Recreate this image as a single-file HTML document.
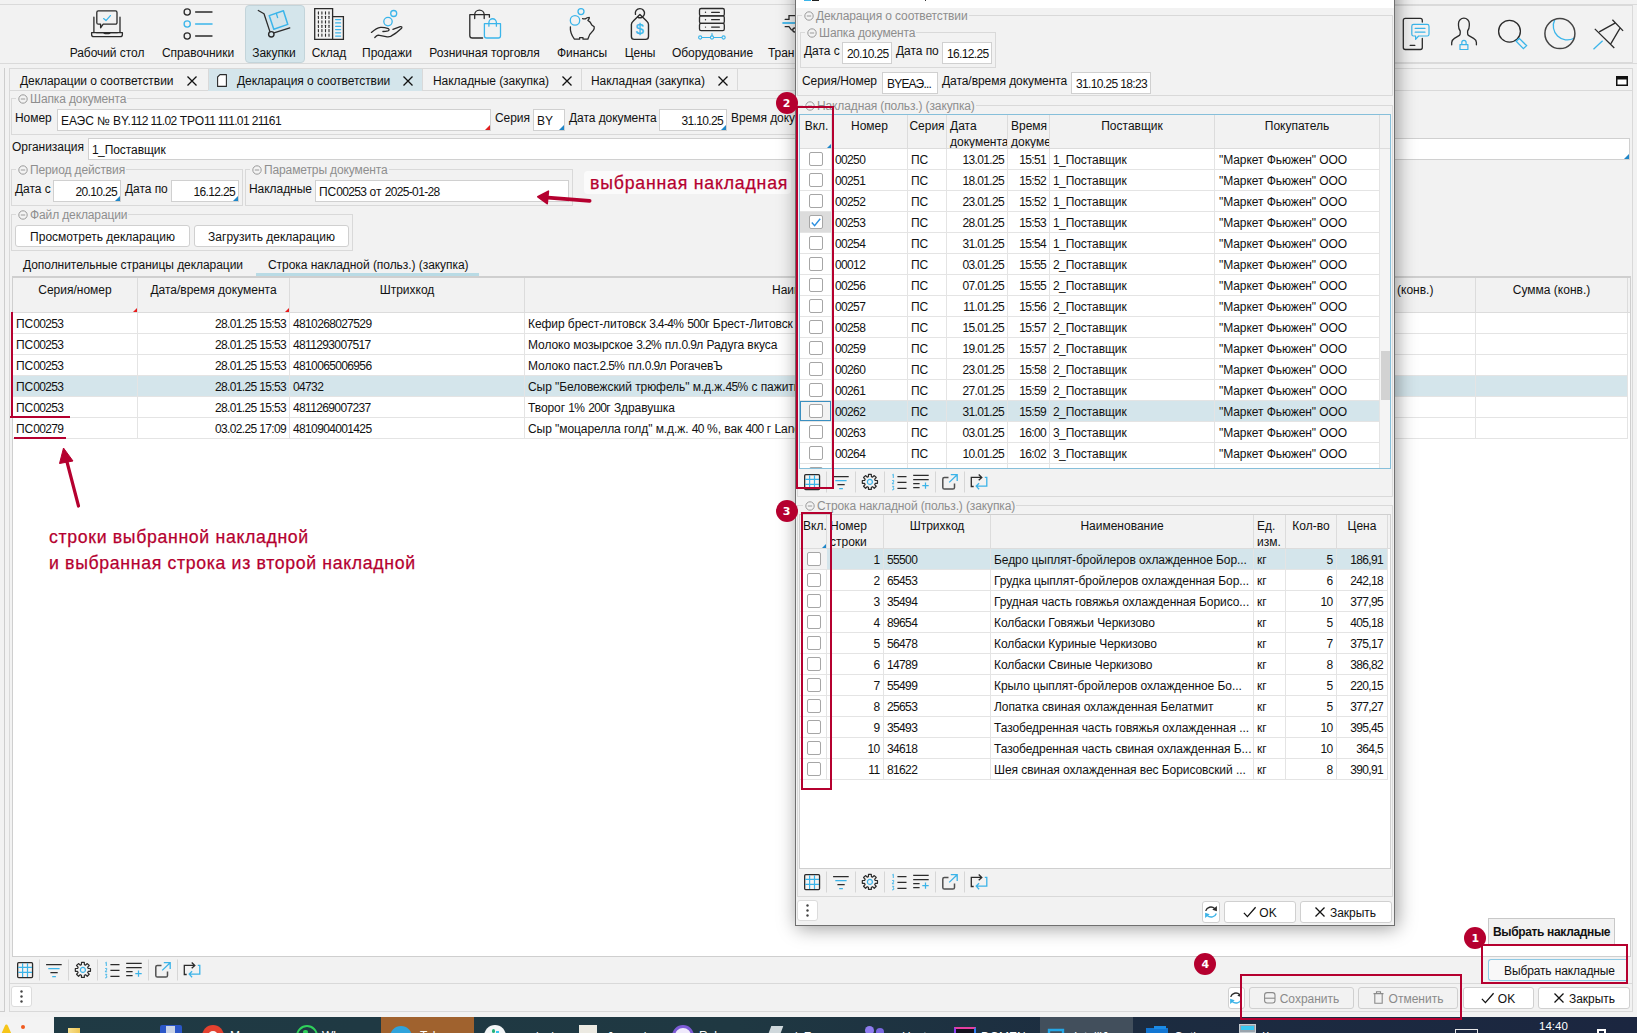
<!DOCTYPE html><html lang="ru"><head><meta charset="utf-8"><title>Декларация о соответствии</title><style>
*{box-sizing:border-box;margin:0;padding:0}
html,body{width:1637px;height:1033px;overflow:hidden;background:#f2f2f2}
body{position:relative;font-family:"Liberation Sans",sans-serif;font-size:12px;color:#111;line-height:14px}
.a{position:absolute;white-space:nowrap}
.l{position:absolute;white-space:nowrap;font-size:12px;color:#111;letter-spacing:-0.05px}
.c{position:absolute;white-space:nowrap;font-size:12px;letter-spacing:-0.07px;color:#111}
.c b,.inp b{font-weight:normal;letter-spacing:-0.64px}
.inp{position:absolute;background:#fff;border:1px solid #d0d0d0;font-size:12px;letter-spacing:-0.07px;white-space:nowrap;overflow:hidden}
.inp span{position:absolute;top:4px}
.nar{font-style:normal;letter-spacing:-0.8px}
.fs{position:absolute;border:1px solid #d9d9d9}
.lg{position:absolute;white-space:nowrap;font-size:12px;color:#8e8e8e;background:#f2f2f2;padding:0 1px;letter-spacing:-0.12px}
.hl{position:absolute;height:1px;background:#d9d9d9}
.vl{position:absolute;width:1px;background:#d9d9d9}
.btn{position:absolute;background:#fff;border:1px solid #d0d0d0;border-radius:3px;text-align:center;font-size:12px;white-space:nowrap}
.tb{position:absolute;background:#fff;border:1px solid #cfcfcf;overflow:hidden}
.hd{position:absolute;background:#f2f2f2;border-right:1px solid #dcdcdc;border-bottom:1px solid #dcdcdc;font-size:12px;text-align:center;white-space:nowrap;overflow:hidden;line-height:16px;padding-top:3px}
.row{position:absolute;left:0;height:21px;border-bottom:1px solid #e4e4e4}
.cb{position:absolute;width:14px;height:14px;border:1px solid #a6a6a6;border-radius:2px;background:#fff}
.rr{position:absolute;border:2px solid #b5002f}
.circ{position:absolute;width:22px;height:22px;border-radius:11px;background:#b5002f;color:#fff;font-weight:bold;font-size:11px;text-align:center;line-height:24.6px;font-family:"DejaVu Sans","Liberation Sans",sans-serif}
.ann{position:absolute;white-space:nowrap;color:#b5002f;font-size:17.7px;letter-spacing:0.66px;line-height:20px;-webkit-text-stroke:0.25px #b5002f}
svg{position:absolute;overflow:visible}
</style></head><body>
<div class="hl" style="left:0px;top:4px;width:1637px;background:#dadada"></div>
<div class="hl" style="left:0px;top:63px;width:1637px;background:#dadada"></div>
<div class="a" style="left:245px;top:5px;width:60px;height:58px;background:#d4e5eb;border:1px solid #c3d4da;border-radius:4px"></div>
<div class="l" style="left:7px;width:200px;text-align:center;top:46px">Рабочий стол</div>
<div class="l" style="left:98px;width:200px;text-align:center;top:46px">Справочники</div>
<div class="l" style="left:174px;width:200px;text-align:center;top:46px">Закупки</div>
<div class="l" style="left:229px;width:200px;text-align:center;top:46px">Склад</div>
<div class="l" style="left:287px;width:200px;text-align:center;top:46px">Продажи</div>
<div class="l" style="left:384.5px;width:200px;text-align:center;top:46px">Розничная торговля</div>
<div class="l" style="left:482px;width:200px;text-align:center;top:46px">Финансы</div>
<div class="l" style="left:540px;width:200px;text-align:center;top:46px">Цены</div>
<div class="l" style="left:612.5px;width:200px;text-align:center;top:46px">Оборудование</div>
<div class="l" style="left:768px;top:46px;">Тран</div>
<svg style="left:88px;top:6px" width="40" height="36" viewBox="88 6 40 36" fill="none" stroke-linecap="round" stroke-linejoin="round" >
<path d="M98.3 10.9H115.5a1.5 1.5 0 0 1 1.5 1.5V22.7a1.5 1.5 0 0 1 -1.5 1.5H103.2L100.6 27.8V24.2H98.3a1.5 1.5 0 0 1 -1.5 -1.5V12.4a1.5 1.5 0 0 1 1.5 -1.5Z" stroke="#2b2b2b" stroke-width="1.3"/>
<path d="M103.6 18.6L106 20.6L110.4 15.6" stroke="#3bb5ea" stroke-width="1.3"/>
<path d="M93.9 17.2V32.4M120 17.2V32.4" stroke="#2b2b2b" stroke-width="1.3"/>
<path d="M96.5 32.6H103.4Q104.2 33.6 105.4 33.6H108.6Q109.8 33.6 110.4 32.6H117.5" stroke="#2b2b2b" stroke-width="1.2"/>
<path d="M91.6 32.6H122.4V34.4a2.2 2.2 0 0 1 -2.2 2.2H93.8a2.2 2.2 0 0 1 -2.2 -2.2Z" stroke="#2b2b2b" stroke-width="1.3"/>
</svg>
<svg style="left:180px;top:6px" width="40" height="36" viewBox="180 6 40 36" fill="none" stroke-linecap="round" stroke-linejoin="round" >
<circle cx="187.2" cy="12" r="3.1" stroke="#2b2b2b" stroke-width="1.3"/><path d="M195.6 12H212" stroke="#2b2b2b" stroke-width="1.3"/>
<circle cx="187.2" cy="24" r="3.1" stroke="#3bb5ea" stroke-width="1.3"/><path d="M195.6 24H212" stroke="#3bb5ea" stroke-width="1.5"/>
<circle cx="187.2" cy="36" r="3.1" stroke="#2b2b2b" stroke-width="1.3"/><path d="M195.6 36H212" stroke="#2b2b2b" stroke-width="1.3"/>
</svg>
<svg style="left:255px;top:6px" width="40" height="36" viewBox="255 6 40 36" fill="none" stroke-linecap="round" stroke-linejoin="round" >
<path d="M269.2 15.6L283.4 10.8L287.8 24.4L273.8 29.2Z" stroke="#3bb5ea" stroke-width="1.5"/>
<path d="M276.3 13.3L277.6 17.6" stroke="#3bb5ea" stroke-width="1.3"/>
<path d="M258.3 10.5L264 13.8L269.9 31.6" stroke="#2b2b2b" stroke-width="1.3"/>
<path d="M274 32.9L289.8 27.9" stroke="#2b2b2b" stroke-width="1.3"/>
<circle cx="271.3" cy="34.3" r="2.7" stroke="#2b2b2b" stroke-width="1.4"/>
</svg>
<svg style="left:310px;top:6px" width="40" height="36" viewBox="310 6 40 36" fill="none" stroke-linecap="round" stroke-linejoin="round" >
<path d="M314.7 8.6H332.6V39.3H314.7Z" stroke="#2b2b2b" stroke-width="1.3" stroke-linejoin="miter"/>
<path d="M332.6 16.6H343.4V39.3H332.6" stroke="#2b2b2b" stroke-width="1.3" stroke-linejoin="miter"/>
<path d="M318.4 11.9V14.1" stroke="#2b2b2b" stroke-width="1.1"/><path d="M318.4 16.299999999999997V18.5" stroke="#2b2b2b" stroke-width="1.1"/><path d="M318.4 20.799999999999997V23.0" stroke="#2b2b2b" stroke-width="1.1"/><path d="M318.4 25.2V27.400000000000002" stroke="#2b2b2b" stroke-width="1.1"/><path d="M318.4 29.599999999999998V31.8" stroke="#2b2b2b" stroke-width="1.1"/><path d="M318.4 34.0V36.2" stroke="#2b2b2b" stroke-width="1.1"/><path d="M321.9 11.9V14.1" stroke="#2b2b2b" stroke-width="1.1"/><path d="M321.9 16.299999999999997V18.5" stroke="#2b2b2b" stroke-width="1.1"/><path d="M321.9 20.799999999999997V23.0" stroke="#2b2b2b" stroke-width="1.1"/><path d="M321.9 25.2V27.400000000000002" stroke="#2b2b2b" stroke-width="1.1"/><path d="M321.9 29.599999999999998V31.8" stroke="#2b2b2b" stroke-width="1.1"/><path d="M321.9 34.0V36.2" stroke="#2b2b2b" stroke-width="1.1"/><path d="M325.5 11.9V14.1" stroke="#2b2b2b" stroke-width="1.1"/><path d="M325.5 16.299999999999997V18.5" stroke="#2b2b2b" stroke-width="1.1"/><path d="M325.5 20.799999999999997V23.0" stroke="#2b2b2b" stroke-width="1.1"/><path d="M325.5 25.2V27.400000000000002" stroke="#2b2b2b" stroke-width="1.1"/><path d="M325.5 29.599999999999998V31.8" stroke="#2b2b2b" stroke-width="1.1"/><path d="M325.5 34.0V36.2" stroke="#2b2b2b" stroke-width="1.1"/><path d="M329.0 11.9V14.1" stroke="#2b2b2b" stroke-width="1.1"/><path d="M329.0 16.299999999999997V18.5" stroke="#2b2b2b" stroke-width="1.1"/><path d="M329.0 20.799999999999997V23.0" stroke="#2b2b2b" stroke-width="1.1"/><path d="M329.0 25.2V27.400000000000002" stroke="#2b2b2b" stroke-width="1.1"/><path d="M329.0 29.599999999999998V31.8" stroke="#2b2b2b" stroke-width="1.1"/><path d="M329.0 34.0V36.2" stroke="#2b2b2b" stroke-width="1.1"/><path d="M335.6 19.6H340.6" stroke="#3bb5ea" stroke-width="1.3"/><path d="M335.6 22.9H340.6" stroke="#3bb5ea" stroke-width="1.3"/><path d="M335.6 26.3H340.6" stroke="#3bb5ea" stroke-width="1.3"/><path d="M335.6 29.6H340.6" stroke="#3bb5ea" stroke-width="1.3"/><path d="M335.6 32.8H340.6" stroke="#3bb5ea" stroke-width="1.3"/><path d="M335.6 36.1H340.6" stroke="#3bb5ea" stroke-width="1.3"/>
</svg>
<svg style="left:368px;top:6px" width="40" height="36" viewBox="368 6 40 36" fill="none" stroke-linecap="round" stroke-linejoin="round" >
<circle cx="393.7" cy="13.5" r="3" stroke="#3bb5ea" stroke-width="1.3"/>
<circle cx="388" cy="21.6" r="4.2" stroke="#3bb5ea" stroke-width="1.3"/>
<path d="M371.4 32.4Q376.5 28 380.6 27.4Q384 27.2 388.4 28.6Q390 30.2 388 30.9Q385.5 31.4 382.9 31.5" stroke="#2b2b2b" stroke-width="1.3"/>
<path d="M392.9 29.4L400.3 26.7Q402.6 26.3 401.6 28.2Q396 33.5 390.6 36.4Q388.6 37.1 386 36.6L378.2 35.2Q376.6 35.6 374.8 37.5" stroke="#2b2b2b" stroke-width="1.3"/>
</svg>
<svg style="left:465px;top:6px" width="40" height="36" viewBox="465 6 40 36" fill="none" stroke-linecap="round" stroke-linejoin="round" >
<path d="M482.6 38H472.4a2.6 2.6 0 0 1 -2.6 -2.6V14.7H489.4V17.2" stroke="#2b2b2b" stroke-width="1.3"/>
<path d="M474.7 18.6V14.8a4.75 4.75 0 0 1 9.5 0V18.6" stroke="#2b2b2b" stroke-width="1.3"/>
<path d="M484.4 23.7H500.5V35.8a2.2 2.2 0 0 1 -2.2 2.2H486.6a2.2 2.2 0 0 1 -2.2 -2.2Z" stroke="#3bb5ea" stroke-width="1.3"/>
<path d="M488.9 26.2V22.5a3.75 3.75 0 0 1 7.5 0V26.2" stroke="#3bb5ea" stroke-width="1.3"/>
</svg>
<svg style="left:565px;top:6px" width="40" height="36" viewBox="565 6 40 36" fill="none" stroke-linecap="round" stroke-linejoin="round" >
<circle cx="581" cy="11.6" r="3" stroke="#3bb5ea" stroke-width="1.3"/>
<circle cx="575" cy="20.4" r="4.7" stroke="#3bb5ea" stroke-width="1.3"/>
<path d="M570.4 26.8Q569.8 33 574.4 39.2H579.6V37.7H583V39.2H587.8Q589.6 33.6 593.2 30.6Q594.6 28.6 594.2 26.8L591.8 25Q590.6 21.8 587.9 20.4Q589.6 18.4 589.3 17.3Q587 17.4 585.5 18.8Q584 19.2 582.6 18.6" stroke="#2b2b2b" stroke-width="1.3"/>
</svg>
<svg style="left:625px;top:4px" width="40" height="38" viewBox="625 4 40 38" fill="none" stroke-linecap="round" stroke-linejoin="round" >
<path d="M633.3 21L639.9 14.5L646.6 21Q648.5 22.6 648.5 24.6V36.5a2.9 2.9 0 0 1 -2.9 2.9H634.3a2.9 2.9 0 0 1 -2.9 -2.9V24.6Q631.4 22.6 633.3 21Z" stroke="#2b2b2b" stroke-width="1.4"/>
<path d="M635.46 14.39A4.6 4.6 0 1 1 637.96 17.37" stroke="#2b2b2b" stroke-width="1.4"/>
<text x="639.9" y="33.6" text-anchor="middle" font-family="Liberation Sans, sans-serif" font-size="14.5" fill="#3bb5ea" stroke="#3bb5ea" stroke-width="0.35">$</text>
</svg>
<svg style="left:694px;top:6px" width="40" height="36" viewBox="694 6 40 36" fill="none" stroke-linecap="round" stroke-linejoin="round" ><rect x="699.5" y="8.5" width="24.8" height="7.4" rx="1.6" stroke="#2b2b2b" stroke-width="1.3"/><circle cx="705.5" cy="12.3" r="0.7" fill="#2b2b2b" stroke="none"/><path d="M711.6 12.3H719.4" stroke="#2b2b2b" stroke-width="1.2"/><rect x="699.5" y="15.9" width="24.8" height="7.4" rx="1.6" stroke="#2b2b2b" stroke-width="1.3"/><circle cx="705.5" cy="19.7" r="0.7" fill="#2b2b2b" stroke="none"/><path d="M711.6 19.7H719.4" stroke="#2b2b2b" stroke-width="1.2"/><rect x="699.5" y="23.3" width="24.8" height="7.4" rx="1.6" stroke="#2b2b2b" stroke-width="1.3"/><circle cx="705.5" cy="27.1" r="0.7" fill="#2b2b2b" stroke="none"/><path d="M711.6 27.1H719.4" stroke="#2b2b2b" stroke-width="1.2"/>
<path d="M700.2 37.5H723.6M712 33.5V36" stroke="#3bb5ea" stroke-width="1.2"/>
<circle cx="700.2" cy="37.5" r="1.6" fill="#f2f2f2" stroke="#3bb5ea" stroke-width="1.1"/><circle cx="712" cy="37.5" r="1.6" fill="#f2f2f2" stroke="#3bb5ea" stroke-width="1.1"/><circle cx="723.6" cy="37.5" r="1.6" fill="#f2f2f2" stroke="#3bb5ea" stroke-width="1.1"/>
</svg>
<svg style="left:780px;top:6px" width="20" height="36" viewBox="780 6 20 36" fill="none" stroke-linecap="round" stroke-linejoin="round" >
<path d="M785.2 19.4H789V15.7H797" stroke="#2b2b2b" stroke-width="1.3" stroke-linejoin="miter"/>
<path d="M782.4 23H797" stroke="#3bb5ea" stroke-width="1.8" stroke-linecap="butt"/>
<path d="M785.2 26.7H789L791.4 29.8H792.6" stroke="#2b2b2b" stroke-width="1.3"/>
<circle cx="794.8" cy="30" r="2" stroke="#2b2b2b" stroke-width="1.3"/>
</svg>
<div class="a" style="left:1380px;top:5px;width:253px;height:58px;border:1px solid #dadada;border-left:none"></div>
<svg style="left:1400px;top:14px" width="34" height="40" viewBox="1400 14 34 40" fill="none" stroke-linecap="round" stroke-linejoin="round" >
<path d="M1422.3 22V20.4a2 2 0 0 0 -2 -2H1405.3a2 2 0 0 0 -2 2V47.5a2 2 0 0 0 2 2H1420.3a2 2 0 0 0 2 -2V38.4" stroke="#2b2b2b" stroke-width="1.3"/>
<path d="M1410.2 45.4H1414.8" stroke="#2b2b2b" stroke-width="1.3"/>
<path d="M1413.6 24.4H1427.2a1.8 1.8 0 0 1 1.8 1.8V34.2a1.8 1.8 0 0 1 -1.8 1.8H1418.6L1415.6 39.4V36H1413.6a1.8 1.8 0 0 1 -1.8 -1.8V26.2a1.8 1.8 0 0 1 1.8 -1.8Z" stroke="#3bb5ea" stroke-width="1.2"/>
<path d="M1415.2 28.4H1425M1415.2 32.2H1425" stroke="#3bb5ea" stroke-width="1.2"/>
</svg>
<svg style="left:1448px;top:14px" width="34" height="40" viewBox="1448 14 34 40" fill="none" stroke-linecap="round" stroke-linejoin="round" >
<path d="M1451.7 44.8V42.6Q1451.8 40 1454.4 38.4L1459.4 35.4Q1460.3 34.6 1460.2 33V31Q1458.5 29 1458.5 25.6V23.6a5.4 5.4 0 0 1 10.8 0V25.6Q1469.3 29 1467.6 31V33Q1467.5 34.6 1468.4 35.4L1473.6 38.4Q1476.3 40 1476.4 42.6V44.8" stroke="#2b2b2b" stroke-width="1.3"/>
<rect x="1460" y="44.6" width="7.9" height="4.9" stroke="#3bb5ea" stroke-width="1.2"/>
<path d="M1461.8 44.4V42.6a2.15 2.15 0 0 1 4.3 0V44.4" stroke="#3bb5ea" stroke-width="1.2"/>
</svg>
<svg style="left:1496px;top:14px" width="34" height="40" viewBox="1496 14 34 40" fill="none" stroke-linecap="round" stroke-linejoin="round" >
<circle cx="1509.5" cy="31.2" r="10.9" stroke="#2b2b2b" stroke-width="1.3"/>
<path d="M1516.2 41.2L1519.2 38.4L1526.6 45.6L1523.4 48.6Z" stroke="#3bb5ea" stroke-width="1.3" stroke-linejoin="miter"/>
</svg>
<svg style="left:1542px;top:14px" width="36" height="40" viewBox="1542 14 36 40" fill="none" stroke-linecap="round" stroke-linejoin="round" >
<path d="M1554.8 19.6A14 14 0 0 0 1574 38.2" stroke="#3bb5ea" stroke-width="1.3"/>
<circle cx="1559.9" cy="33.6" r="15" stroke="#444" stroke-width="1.5"/>
</svg>
<svg style="left:1590px;top:14px" width="38" height="40" viewBox="1590 14 38 40" fill="none" stroke-linecap="round" stroke-linejoin="round" >
<path d="M1594.8 28.9L1614.3 48M1612.4 19.8L1623.1 30.9M1599.2 31.9L1615 23.1M1610.9 43.6L1619.9 28.4" stroke="#2b2b2b" stroke-width="1.3" stroke-linecap="butt"/>
<path d="M1602.6 40.7L1593.5 49.2" stroke="#3bb5ea" stroke-width="1.3" stroke-linecap="butt"/>
</svg>
<div class="vl" style="left:4px;top:68px;height:944px;background:#cdcdcd"></div>
<div class="hl" style="left:0px;top:1011px;width:5px;background:#cdcdcd"></div>
<div class="a" style="left:9px;top:68px;width:1624px;height:23px;border:1px solid #d9d9d9;border-bottom:none"></div>
<div class="hl" style="left:9px;top:90px;width:1624px;background:#d9d9d9"></div>
<div class="a" style="left:208px;top:69px;width:214px;height:22px;background:#d4e5eb"></div>
<div class="vl" style="left:208px;top:69px;height:21px;background:#d9d9d9"></div>
<div class="vl" style="left:422px;top:69px;height:21px;background:#d9d9d9"></div>
<div class="vl" style="left:581px;top:69px;height:21px;background:#d9d9d9"></div>
<div class="vl" style="left:737px;top:69px;height:21px;background:#d9d9d9"></div>
<div class="l" style="left:20px;top:74px;">Декларации о соответствии</div>
<svg style="left:187px;top:76px" width="10" height="10" viewBox="0 0 10 10"><path d="M0.5 0.5L9.5 9.5M9.5 0.5L0.5 9.5" stroke="#111" stroke-width="1.3" fill="none"/></svg>
<svg style="left:217px;top:74px" width="10" height="13" viewBox="0 0 10 13"><path d="M3 0.6H9.4V12.4H0.6V3Z" fill="#fff" stroke="#2b2b2b" stroke-width="1.1" stroke-linejoin="round"/></svg>
<div class="l" style="left:237px;top:74px;">Декларация о соответствии</div>
<svg style="left:403px;top:76px" width="10" height="10" viewBox="0 0 10 10"><path d="M0.5 0.5L9.5 9.5M9.5 0.5L0.5 9.5" stroke="#111" stroke-width="1.3" fill="none"/></svg>
<div class="l" style="left:433px;top:74px;">Накладные (закупка)</div>
<svg style="left:562px;top:76px" width="10" height="10" viewBox="0 0 10 10"><path d="M0.5 0.5L9.5 9.5M9.5 0.5L0.5 9.5" stroke="#111" stroke-width="1.3" fill="none"/></svg>
<div class="l" style="left:591px;top:74px;">Накладная (закупка)</div>
<svg style="left:718px;top:76px" width="10" height="10" viewBox="0 0 10 10"><path d="M0.5 0.5L9.5 9.5M9.5 0.5L0.5 9.5" stroke="#111" stroke-width="1.3" fill="none"/></svg>
<svg style="left:1616px;top:76px" width="12" height="10" viewBox="0 0 12 10"><rect x="0.75" y="0.75" width="10.5" height="8.5" fill="#fff" stroke="#111" stroke-width="1.5"/><rect x="0" y="0" width="12" height="3.5" fill="#111"/></svg>
<div class="vl" style="left:9px;top:91px;height:921px;background:#d9d9d9"></div>
<div class="vl" style="left:1632px;top:91px;height:921px;background:#d9d9d9"></div>
<div class="fs" style="left:11px;top:98px;width:1300px;height:37px"></div>
<div class="lg" style="left:16px;top:92px"><svg style="left:1.7px;top:2px" width="10" height="10" viewBox="0 0 10 10"><circle cx="5" cy="5" r="4.2" fill="none" stroke="#9a9a9a" stroke-width="1"/><path d="M2.8 5H7.2" stroke="#9a9a9a" stroke-width="1"/></svg><span style="margin-left:13px">Шапка документа</span></div>
<div class="l" style="left:15px;top:111px;">Номер</div>
<div class="inp" style="left:57px;top:109px;width:434px;height:22px"><span style="left:3px">ЕАЭС № BY.<b>112 11.02</b> ТРО<b>11 111.01 21161</b></span></div>
<svg style="left:485px;top:125px" width="5" height="5"><path d="M5 0V5H0Z" fill="#e02020"/></svg>
<div class="l" style="left:495px;top:111px;">Серия</div>
<div class="inp" style="left:533px;top:109px;width:32px;height:22px"><span style="left:3px">BY</span></div>
<svg style="left:559px;top:125px" width="5" height="5"><path d="M5 0V5H0Z" fill="#1e86c8"/></svg>
<div class="l" style="left:569px;top:111px;">Дата документа</div>
<div class="inp" style="left:659px;top:109px;width:68px;height:22px"><span style="right:3px"><b>31.10.25</b></span></div>
<svg style="left:721px;top:125px" width="5" height="5"><path d="M5 0V5H0Z" fill="#1e86c8"/></svg>
<div class="l" style="left:731px;top:111px;">Время документа</div>
<div class="l" style="left:12px;top:140px;">Организация</div>
<div class="inp" style="left:88px;top:138px;width:1542px;height:22px"><span style="left:3px"><b>1</b>_Поставщик</span></div>
<svg style="left:1624px;top:154px" width="5" height="5"><path d="M5 0V5H0Z" fill="#1e86c8"/></svg>
<div class="fs" style="left:11px;top:169px;width:232px;height:37px"></div>
<div class="lg" style="left:16px;top:163px"><svg style="left:1.7px;top:2px" width="10" height="10" viewBox="0 0 10 10"><circle cx="5" cy="5" r="4.2" fill="none" stroke="#9a9a9a" stroke-width="1"/><path d="M2.8 5H7.2" stroke="#9a9a9a" stroke-width="1"/></svg><span style="margin-left:13px">Период действия</span></div>
<div class="l" style="left:15px;top:182px;">Дата с</div>
<div class="inp" style="left:53px;top:180px;width:68px;height:22px"><span style="right:3px"><b>20.10.25</b></span></div>
<svg style="left:115px;top:196px" width="5" height="5"><path d="M5 0V5H0Z" fill="#1e86c8"/></svg>
<div class="l" style="left:125px;top:182px;">Дата по</div>
<div class="inp" style="left:171px;top:180px;width:68px;height:22px"><span style="right:3px"><b>16.12.25</b></span></div>
<svg style="left:233px;top:196px" width="5" height="5"><path d="M5 0V5H0Z" fill="#1e86c8"/></svg>
<div class="fs" style="left:245px;top:169px;width:328px;height:37px"></div>
<div class="lg" style="left:250px;top:163px"><svg style="left:1.7px;top:2px" width="10" height="10" viewBox="0 0 10 10"><circle cx="5" cy="5" r="4.2" fill="none" stroke="#9a9a9a" stroke-width="1"/><path d="M2.8 5H7.2" stroke="#9a9a9a" stroke-width="1"/></svg><span style="margin-left:13px">Параметры документа</span></div>
<div class="l" style="left:249px;top:182px;">Накладные</div>
<div class="inp" style="left:315px;top:180px;width:254px;height:22px"><span style="left:3px">ПС<b>00253</b> от <b>2025-01-28</b></span></div>
<div class="fs" style="left:11px;top:214px;width:342px;height:37px"></div>
<div class="lg" style="left:16px;top:208px"><svg style="left:1.7px;top:2px" width="10" height="10" viewBox="0 0 10 10"><circle cx="5" cy="5" r="4.2" fill="none" stroke="#9a9a9a" stroke-width="1"/><path d="M2.8 5H7.2" stroke="#9a9a9a" stroke-width="1"/></svg><span style="margin-left:13px">Файл декларации</span></div>
<div class="btn" style="left:15px;top:225px;width:175px;height:22px;line-height:22px">Просмотреть декларацию</div>
<div class="btn" style="left:194px;top:225px;width:155px;height:22px;line-height:22px">Загрузить декларацию</div>
<div class="a" style="left:584px;top:171px;width:207px;height:23px;background:#fbfbfb;border-radius:4px"></div>
<div class="ann" style="left:590px;top:173px;letter-spacing:0.8px">выбранная накладная</div>
<svg style="left:536px;top:188px" width="56" height="18" viewBox="0 0 56 18"><path d="M53.6 12.8L12 9.6" stroke="#b5002f" stroke-width="3.8" stroke-linecap="round"/><path d="M1.8 8.8L12.4 3.2L11.2 15.6Z" fill="#b5002f" stroke="#b5002f" stroke-width="1.6" stroke-linejoin="round"/></svg>
<div class="l" style="left:23px;top:258px;">Дополнительные страницы декларации</div>
<div class="l" style="left:268px;top:258px;">Строка накладной (польз.) (закупка)</div>
<div class="a" style="left:256px;top:273px;width:223px;height:3px;background:#b9dbe5"></div>
<div class="hl" style="left:12px;top:276px;width:1619px;background:#cfcfcf"></div>
<div class="hl" style="left:12px;top:277px;width:1619px;background:#cfcfcf"></div>
<div class="tb" style="left:12px;top:278px;width:1619px;height:679px;border-top:none">
<div class="hd" style="left:0px;top:0;width:125px;height:35px;padding-top:4px">Серия/номер</div>
<div class="hd" style="left:125px;top:0;width:152px;height:35px;padding-top:4px">Дата/время документа</div>
<div class="hd" style="left:277px;top:0;width:235px;height:35px;padding-top:4px">Штрихкод</div>
<div class="hd" style="left:512px;top:0;width:760px;height:35px;padding-top:4px"></div>
<div class="hd" style="left:1272px;top:0;width:191px;height:35px;padding-top:4px"></div>
<div class="hd" style="left:1463px;top:0;width:152px;height:35px;padding-top:4px">Сумма (конв.)</div>
<div class="hd" style="left:1615px;top:0;width:10px;height:35px;border-right:none"></div>
<div class="a" style="left:759px;top:5px;font-size:12px">Наименование</div>
<div class="a" style="left:1384px;top:5px;font-size:12px">(конв.)</div>
<svg style="left:120px;top:30px" width="4" height="4"><path d="M4 0V4H0Z" fill="#e81c1c"/></svg>
<svg style="left:272px;top:30px" width="4" height="4"><path d="M4 0V4H0Z" fill="#e81c1c"/></svg>
<div class="row" style="top:35px;width:1615px;background:#fff">
<div class="vl" style="left:124px;top:0;height:20px;background:#e4e4e4"></div>
<div class="vl" style="left:276px;top:0;height:20px;background:#e4e4e4"></div>
<div class="vl" style="left:511px;top:0;height:20px;background:#e4e4e4"></div>
<div class="vl" style="left:1271px;top:0;height:20px;background:#e4e4e4"></div>
<div class="vl" style="left:1462px;top:0;height:20px;background:#e4e4e4"></div>
<div class="vl" style="left:1614px;top:0;height:20px;background:#e4e4e4"></div>
<div class="c" style="left:3px;top:4px">ПС<b>00253</b></div>
<div class="c" style="left:125px;width:148px;text-align:right;top:4px"><b>28.01.25 15:53</b></div>
<div class="c" style="left:280px;top:4px"><b>4810268027529</b></div>
<div class="c" style="left:515px;top:4px">Кефир брест-литовск <b>3.4-4</b>% <b>500</b>г Брест-Литовск</div>
</div>
<div class="row" style="top:56px;width:1615px;background:#fff">
<div class="vl" style="left:124px;top:0;height:20px;background:#e4e4e4"></div>
<div class="vl" style="left:276px;top:0;height:20px;background:#e4e4e4"></div>
<div class="vl" style="left:511px;top:0;height:20px;background:#e4e4e4"></div>
<div class="vl" style="left:1271px;top:0;height:20px;background:#e4e4e4"></div>
<div class="vl" style="left:1462px;top:0;height:20px;background:#e4e4e4"></div>
<div class="vl" style="left:1614px;top:0;height:20px;background:#e4e4e4"></div>
<div class="c" style="left:3px;top:4px">ПС<b>00253</b></div>
<div class="c" style="left:125px;width:148px;text-align:right;top:4px"><b>28.01.25 15:53</b></div>
<div class="c" style="left:280px;top:4px"><b>4811293007517</b></div>
<div class="c" style="left:515px;top:4px">Молоко мозырское <b>3.2</b>% пл.<b>0.9</b>л Радуга вкуса</div>
</div>
<div class="row" style="top:77px;width:1615px;background:#fff">
<div class="vl" style="left:124px;top:0;height:20px;background:#e4e4e4"></div>
<div class="vl" style="left:276px;top:0;height:20px;background:#e4e4e4"></div>
<div class="vl" style="left:511px;top:0;height:20px;background:#e4e4e4"></div>
<div class="vl" style="left:1271px;top:0;height:20px;background:#e4e4e4"></div>
<div class="vl" style="left:1462px;top:0;height:20px;background:#e4e4e4"></div>
<div class="vl" style="left:1614px;top:0;height:20px;background:#e4e4e4"></div>
<div class="c" style="left:3px;top:4px">ПС<b>00253</b></div>
<div class="c" style="left:125px;width:148px;text-align:right;top:4px"><b>28.01.25 15:53</b></div>
<div class="c" style="left:280px;top:4px"><b>4810065006956</b></div>
<div class="c" style="left:515px;top:4px">Молоко паст.<b>2.5</b>% пл.<b>0.9</b>л РогачевЪ</div>
</div>
<div class="row" style="top:98px;width:1615px;background:#d4e5eb">
<div class="vl" style="left:124px;top:0;height:20px;background:#e4e4e4"></div>
<div class="vl" style="left:276px;top:0;height:20px;background:#e4e4e4"></div>
<div class="vl" style="left:511px;top:0;height:20px;background:#e4e4e4"></div>
<div class="vl" style="left:1271px;top:0;height:20px;background:#e4e4e4"></div>
<div class="vl" style="left:1462px;top:0;height:20px;background:#e4e4e4"></div>
<div class="vl" style="left:1614px;top:0;height:20px;background:#e4e4e4"></div>
<div class="c" style="left:3px;top:4px">ПС<b>00253</b></div>
<div class="c" style="left:125px;width:148px;text-align:right;top:4px"><b>28.01.25 15:53</b></div>
<div class="c" style="left:280px;top:4px"><b>04732</b></div>
<div class="c" style="left:515px;top:4px">Сыр "Беловежский трюфель" м.д.ж.<b>45</b>% с пажитником</div>
</div>
<div class="row" style="top:119px;width:1615px;background:#fff">
<div class="vl" style="left:124px;top:0;height:20px;background:#e4e4e4"></div>
<div class="vl" style="left:276px;top:0;height:20px;background:#e4e4e4"></div>
<div class="vl" style="left:511px;top:0;height:20px;background:#e4e4e4"></div>
<div class="vl" style="left:1271px;top:0;height:20px;background:#e4e4e4"></div>
<div class="vl" style="left:1462px;top:0;height:20px;background:#e4e4e4"></div>
<div class="vl" style="left:1614px;top:0;height:20px;background:#e4e4e4"></div>
<div class="c" style="left:3px;top:4px">ПС<b>00253</b></div>
<div class="c" style="left:125px;width:148px;text-align:right;top:4px"><b>28.01.25 15:53</b></div>
<div class="c" style="left:280px;top:4px"><b>4811269007237</b></div>
<div class="c" style="left:515px;top:4px">Творог <b>1</b>% <b>200</b>г Здравушка</div>
</div>
<div class="row" style="top:140px;width:1615px;background:#fff">
<div class="vl" style="left:124px;top:0;height:20px;background:#e4e4e4"></div>
<div class="vl" style="left:276px;top:0;height:20px;background:#e4e4e4"></div>
<div class="vl" style="left:511px;top:0;height:20px;background:#e4e4e4"></div>
<div class="vl" style="left:1271px;top:0;height:20px;background:#e4e4e4"></div>
<div class="vl" style="left:1462px;top:0;height:20px;background:#e4e4e4"></div>
<div class="vl" style="left:1614px;top:0;height:20px;background:#e4e4e4"></div>
<div class="c" style="left:3px;top:4px">ПС<b>00279</b></div>
<div class="c" style="left:125px;width:148px;text-align:right;top:4px"><b>03.02.25 17:09</b></div>
<div class="c" style="left:280px;top:4px"><b>4810904001425</b></div>
<div class="c" style="left:515px;top:4px">Сыр "моцарелла голд" м.д.ж. <b>40</b> %, вак <b>400</b> г Landers</div>
</div>
</div>
<svg style="left:17px;top:958px" width="190" height="24" viewBox="0 0 190 24" fill="none"><path d="M22.5 1.5V22.5" stroke="#d6d6d6" stroke-width="1"/><path d="M51.5 1.5V22.5" stroke="#d6d6d6" stroke-width="1"/><path d="M80.5 1.5V22.5" stroke="#d6d6d6" stroke-width="1"/><path d="M131.5 1.5V22.5" stroke="#d6d6d6" stroke-width="1"/><path d="M160.5 1.5V22.5" stroke="#d6d6d6" stroke-width="1"/>
<rect x="0.65" y="4.65" width="14.9" height="14.9" rx="1" fill="#f7f3f1" stroke="#2b2b2b" stroke-width="1.3"/>
<path d="M5.6 5.2V19M10.5 5.2V19M1.2 9.4H15M1.2 14.4H15" stroke="#3bb3e8" stroke-width="1.2"/>
<path d="M29.1 6.5H44.7M33.4 14.5H40.7" stroke="#2b2b2b" stroke-width="1.25"/>
<path d="M31.3 10.5H42.6M35.2 18.5H38.9" stroke="#3bb3e8" stroke-width="1.25"/>
<g transform="translate(65.9 11.9)"><path d="M-1.40 -7.57L1.40 -7.57L1.47 -5.30L2.71 -4.79L4.36 -6.35L6.35 -4.36L4.79 -2.71L5.30 -1.47L7.57 -1.40L7.57 1.40L5.30 1.47L4.79 2.71L6.35 4.36L4.36 6.35L2.71 4.79L1.47 5.30L1.40 7.57L-1.40 7.57L-1.47 5.30L-2.71 4.79L-4.36 6.35L-6.35 4.36L-4.79 2.71L-5.30 1.47L-7.57 1.40L-7.57 -1.40L-5.30 -1.47L-4.79 -2.71L-6.35 -4.36L-4.36 -6.35L-2.71 -4.79L-1.47 -5.30Z" stroke="#2b2b2b" stroke-width="1.2" stroke-linejoin="round"/><circle r="2.5" stroke="#3bb3e8" stroke-width="1.2"/></g>
<path d="M93.4 6.5H102.5M93.4 12.4H102.5M93.4 18.4H102.5" stroke="#2b2b2b" stroke-width="1.25"/>
<path d="M88.3 5L89.3 4.2V8M88.2 10.6Q89.2 9.8 89.9 10.7Q90 11.6 88.2 13.8H90.1M88.2 16.3H89.9L89 17.8Q90.3 18.2 89.8 19.4Q89.2 20.2 88.1 19.8" stroke="#3bb3e8" stroke-width="0.95"/>
<path d="M109.2 5.4H124.7M109.2 9.6H124.7M109.2 13.6H115.6M109.2 17.7H115.6" stroke="#2b2b2b" stroke-width="1.25"/>
<path d="M118.3 15.6H124.7M121.5 12.4V18.8" stroke="#3bb3e8" stroke-width="1.25"/>
<path d="M144.5 7.4H140.4a1.6 1.6 0 0 0 -1.6 1.6V17.4a1.6 1.6 0 0 0 1.6 1.6H148.9a1.6 1.6 0 0 0 1.6 -1.6V13.5" stroke="#505050" stroke-width="1.5"/>
<path d="M145.2 12.4L152.9 5M146.8 4.7H153.2V11.1" stroke="#3bb3e8" stroke-width="1.3"/>
<path d="M169.7 16.5H167.3V7.4H177.4M174.7 4.6L177.8 7.4L174.7 10.3" stroke="#2b2b2b" stroke-width="1.3"/>
<path d="M180.8 7.4H182.8V16.1H172.6M175.1 13.3L172.2 16.1L175.1 19.2" stroke="#3bb3e8" stroke-width="1.3"/>
</svg>
<div class="hl" style="left:9px;top:983px;width:1624px;background:#d9d9d9"></div>
<div class="btn" style="left:11px;top:985.5px;width:20.5px;height:21px;border-color:#dcdcdc"></div>
<svg style="left:19.75px;top:989.5px" width="3" height="13" viewBox="0 0 3 13"><circle cx="1.5" cy="1.5" r="1.2" fill="#444"/><circle cx="1.5" cy="6.5" r="1.2" fill="#444"/><circle cx="1.5" cy="11.5" r="1.2" fill="#444"/></svg>
<div class="hl" style="left:9px;top:1011px;width:1624px;background:#d9d9d9"></div>
<div class="hl" style="left:0px;top:1017px;width:54px;background:#c9c9c9"></div>
<div class="a" style="left:11px;top:312px;width:2px;height:105px;background:#b5002f"></div>
<div class="a" style="left:10px;top:416px;width:60px;height:2px;background:#b5002f"></div>
<div class="a" style="left:14px;top:437px;width:52px;height:2px;background:#b5002f"></div>
<svg style="left:56px;top:446px" width="28" height="64" viewBox="0 0 28 64"><path d="M22.5 60L10.5 14" stroke="#b5002f" stroke-width="3.2" stroke-linecap="round"/><path d="M7.5 2L17 15L3.5 17.5Z" fill="#b5002f" stroke="#b5002f" stroke-width="1" stroke-linejoin="round"/></svg>
<div class="ann" style="left:49px;top:527px">строки выбранной накладной</div>
<div class="ann" style="left:49px;top:553px">и выбранная строка из второй накладной</div>
<div class="a" style="left:1488px;top:918px;width:127px;height:27px;background:#f2f2f2;border:1px solid #c8c8c8"></div>
<div class="l" style="left:1493px;top:925px;font-weight:bold;letter-spacing:-0.35px">Выбрать накладные</div>
<div class="btn" style="left:1488px;top:959px;width:139px;height:22px;line-height:23px;border-color:#8fc9e4;background:#f8f8f8;text-align:left;padding-left:15px;letter-spacing:-0.12px;border-radius:3px 0 0 3px;border-right:none">Выбрать накладные</div>
<div class="btn" style="left:1228px;top:987px;width:17px;height:22px"></div>
<svg style="left:1230px;top:992px" width="12" height="12" viewBox="0 0 12 12"><path d="M0.7 4.9C1.9 1.1 6.6 -0.3 9.9 2.7" fill="none" stroke="#2b2b2b" stroke-width="1.4"/><path d="M11.9 0.1V5.3L7.3 3.7Z" fill="#2b2b2b"/><path d="M11.3 7.5C10.1 11 5.4 12.3 2.1 9.5" fill="none" stroke="#3bb3e8" stroke-width="1.4"/><path d="M0.1 11.9V6.7L4.7 8.3Z" fill="#3bb3e8"/></svg>
<div class="btn" style="left:1249px;top:987px;width:105px;height:22px;background:#f2f2f2;color:#8a8a8a;line-height:22px;padding-left:16px">Сохранить</div>
<svg style="left:1264px;top:992px" width="12" height="12" viewBox="0 0 12 12"><rect x="0.6" y="0.6" width="10.4" height="10.4" rx="2.5" fill="none" stroke="#8a8a8a" stroke-width="1.1"/><path d="M0.6 6.2H11" stroke="#8a8a8a" stroke-width="1.1"/></svg>
<div class="btn" style="left:1358px;top:987px;width:100px;height:22px;background:#f2f2f2;color:#8a8a8a;line-height:22px;padding-left:16px">Отменить</div>
<svg style="left:1373px;top:991px" width="11" height="13" viewBox="0 0 11 13"><path d="M0.5 2.6H10.5M3.5 2.6V0.8H7.5V2.6M1.8 2.6V12.2H9.2V2.6" fill="none" stroke="#8a8a8a" stroke-width="1.1"/></svg>
<div class="btn" style="left:1462.5px;top:987px;width:71px;height:22px;line-height:22px;padding-left:17px">OK</div>
<svg style="left:1481px;top:992px" width="13" height="11" viewBox="0 0 13 11"><path d="M0.9 6.9L4.4 10.6L12.6 1.2" fill="none" stroke="#111" stroke-width="1.3"/></svg>
<div class="btn" style="left:1538px;top:987px;width:92px;height:22px;line-height:22px;padding-left:16px">Закрыть</div>
<svg style="left:1554px;top:993px" width="10" height="10" viewBox="0 0 10 10"><path d="M0.5 0.5L9.5 9.5M9.5 0.5L0.5 9.5" stroke="#111" stroke-width="1.3" fill="none"/></svg>
<div class="a" style="left:0px;top:1017px;width:1637px;height:16px;background:linear-gradient(90deg,#1f3a44 0%,#1f3842 45%,#1c2c40 68%,#1b2640 100%)"></div>
<div class="a" style="left:0px;top:1017px;width:54px;height:16px;background:#f3f3f3"></div>
<div class="a" style="left:381px;top:1017px;width:93px;height:16px;background:#a0622e"></div>
<div class="a" style="left:1040px;top:1017px;width:93px;height:16px;background:#424f5c"></div>
<svg style="left:0;top:1024px" width="14" height="9" viewBox="0 0 14 9"><path d="M6.4 0.6Q7.4 0.6 8 2L12 11H0.8L4.8 2Q5.4 0.6 6.4 0.6Z" fill="#f6c519"/></svg>
<div class="a" style="left:20.6px;top:1025px;width:4.2px;height:4.2px;background:#f05a1e;border-radius:2.1px"></div>
<div class="a" style="left:68px;top:1028px;width:12px;height:5px;background:linear-gradient(90deg,#f7e08f,#efc755)"></div>
<div class="a" style="left:160px;top:1025px;width:22px;height:8px;background:#2b57c8;border-radius:2px 2px 0 0"></div>
<div class="a" style="left:166px;top:1026px;width:9px;height:7px;background:#c9d3e6"></div>
<div class="a" style="left:202px;top:1025px;width:22px;height:22px;background:#e4412f;border-radius:11px"></div>
<div class="a" style="left:208px;top:1031px;width:10px;height:10px;background:#f7f7f7;border-radius:5px"></div>
<div class="a" style="left:210px;top:1032.5px;width:6px;height:6px;background:#3a7de0;border-radius:3px"></div>
<div class="a" style="left:230px;top:1029px;color:#fff;font-size:12px;line-height:14px">Mo</div>
<div class="a" style="left:295.5px;top:1024.5px;width:22.5px;height:22.5px;border:2.5px solid #2fd15b;border-radius:12px"></div>
<div class="a" style="left:303px;top:1030px;width:5px;height:4px;background:#2fd15b;border-radius:2px"></div>
<div class="a" style="left:322px;top:1029px;color:#fff;font-size:12px;line-height:14px">Wh</div>
<div class="a" style="left:390px;top:1025.5px;width:22px;height:22px;background:#2ea3dc;border-radius:11px"></div>
<div class="a" style="left:420px;top:1029px;color:#fff;font-size:12px;line-height:14px">Tel</div>
<div class="a" style="left:484px;top:1025px;width:22px;height:22px;background:#f3f6f7;border-radius:11px"></div>
<div class="a" style="left:492px;top:1029px;width:3px;height:4px;background:#23b27a;border-radius:1.5px"></div>
<div class="a" style="left:496px;top:1031px;width:3px;height:2px;background:#36c5f0"></div>
<div class="a" style="left:530px;top:1030px;color:#fff;font-size:12px;line-height:14px">slack</div>
<div class="a" style="left:579px;top:1025px;width:18px;height:8px;background:#eceae2"></div>
<div class="a" style="left:607px;top:1030px;color:#fff;font-size:12px;line-height:14px">Journal</div>
<div class="a" style="left:672px;top:1025px;width:22px;height:22px;border:3px solid #7d5bd6;border-radius:11px;background:#efeafb"></div>
<div class="a" style="left:699px;top:1029px;color:#fff;font-size:12px;line-height:14px">Rak</div>
<div class="a" style="left:770px;top:1026px;width:12px;height:7px;background:#cfd8dc;transform:skewX(-20deg)"></div>
<div class="a" style="left:795px;top:1030px;color:#fff;font-size:12px;line-height:14px">lsF</div>
<div class="a" style="left:865px;top:1026px;width:9px;height:9px;background:#8f7cf0;border-radius:5px"></div>
<div class="a" style="left:876px;top:1028px;width:8px;height:8px;background:#7a68e0;border-radius:4px"></div>
<div class="a" style="left:902px;top:1030px;color:#fff;font-size:12px;line-height:14px">Host</div>
<div class="a" style="left:954px;top:1027px;width:22px;height:6px;background:#14101c;border-top:2px solid #e63fa0;border-left:2px solid #8b3ff0;border-right:2px solid #2f7df0"></div>
<div class="a" style="left:981px;top:1030px;color:#fff;font-size:12px;line-height:14px">DOMEN</div>
<svg style="left:1048px;top:1029px" width="16" height="4" viewBox="0 0 16 4"><path d="M1 4V1H15V4" fill="none" stroke="#25a7e6" stroke-width="2.4"/></svg>
<div class="a" style="left:1074px;top:1030px;color:#fff;font-size:12px;line-height:14px">IntelliJ</div>
<div class="a" style="left:1146px;top:1028px;width:22px;height:5px;background:#1276d3"></div>
<div class="a" style="left:1154px;top:1026px;width:12px;height:3px;background:#1b8be6"></div>
<div class="a" style="left:1174px;top:1030px;color:#fff;font-size:12px;line-height:14px">Outl</div>
<div class="a" style="left:1239px;top:1024px;width:17px;height:9px;background:#9aa4ad;border:1px solid #c6ccd2"></div>
<div class="a" style="left:1241px;top:1026px;width:13px;height:4px;background:#39c8f2"></div>
<div class="a" style="left:1262px;top:1030px;color:#fff;font-size:12px;line-height:14px">Ком</div>
<div class="a" style="left:1455px;top:1029px;width:23px;height:6px;border:1px solid #e8e8e8;border-bottom:none"></div>
<div class="a" style="left:1490px;top:1031px;color:#fff;font-size:12px;line-height:14px">РУС</div>
<div class="a" style="left:1539px;top:1020px;color:#fff;font-size:11.5px;line-height:13.5px">14:40</div>
<div class="a" style="left:1597px;top:1029px;width:9px;height:4px;border:2px solid #fff;border-bottom:none"></div>
<div class="a" style="left:1481px;top:944px;width:147px;height:40px;border:2px solid #b5002f"></div>
<div class="a" style="left:1240px;top:974px;width:222px;height:46px;border:2px solid #b5002f"></div>
<div class="circ" style="left:1464.3px;top:926.6px">1</div>
<div class="circ" style="left:1194.4px;top:953.4px">4</div>
<div class="a" style="left:795px;top:-30px;width:600px;height:956px;background:#f2f2f2;border:1px solid #707070;box-shadow:2px 2px 18px 0 rgba(0,0,0,0.4)"></div>
<div class="a" style="left:796px;top:0px;width:598px;height:8px;background:#fff"></div>
<div class="a" style="left:804px;top:0px;width:7px;height:1px;background:#3bb5ea"></div>
<div class="a" style="left:812px;top:0px;width:7px;height:1px;background:#222"></div>
<div class="a" style="left:925px;top:0px;width:1px;height:1px;background:#333"></div>
<div class="fs" style="left:797px;top:15px;width:596px;height:81px"></div>
<div class="lg" style="left:802px;top:9px"><svg style="left:1.7px;top:2px" width="10" height="10" viewBox="0 0 10 10"><circle cx="5" cy="5" r="4.2" fill="none" stroke="#9a9a9a" stroke-width="1"/><path d="M2.8 5H7.2" stroke="#9a9a9a" stroke-width="1"/></svg><span style="margin-left:13px">Декларация о соответствии</span></div>
<div class="fs" style="left:800px;top:32px;width:196px;height:36px"></div>
<div class="lg" style="left:805px;top:26px"><svg style="left:1.7px;top:2px" width="10" height="10" viewBox="0 0 10 10"><circle cx="5" cy="5" r="4.2" fill="none" stroke="#9a9a9a" stroke-width="1"/><path d="M2.8 5H7.2" stroke="#9a9a9a" stroke-width="1"/></svg><span style="margin-left:13px">Шапка документа</span></div>
<div class="l" style="left:804px;top:44px;">Дата с</div>
<div class="inp" style="left:842px;top:42px;width:50px;height:22px"><span style="left:4px"><b>20.10.25</b></span></div>
<div class="l" style="left:896px;top:44px;">Дата по</div>
<div class="inp" style="left:942px;top:42px;width:50px;height:22px"><span style="left:4px"><b>16.12.25</b></span></div>
<div class="l" style="left:802px;top:74px;">Серия/Номер</div>
<div class="inp" style="left:882px;top:72px;width:56px;height:22px"><span style="left:4px"><i class="nar">BYЕАЭ...</i></span></div>
<div class="l" style="left:942px;top:74px;">Дата/время документа</div>
<div class="inp" style="left:1071px;top:72px;width:80px;height:22px"><span style="left:4px"><b>31.10.25 18:23</b></span></div>
<div class="hl" style="left:798px;top:105px;width:595px;background:#d9d9d9"></div>
<div class="lg" style="left:803px;top:99px"><svg style="left:1.7px;top:2px" width="10" height="10" viewBox="0 0 10 10"><circle cx="5" cy="5" r="4.2" fill="none" stroke="#9a9a9a" stroke-width="1"/><path d="M2.8 5H7.2" stroke="#9a9a9a" stroke-width="1"/></svg><span style="margin-left:13px">Накладная (польз.) (закупка)</span></div>
<div class="vl" style="left:797px;top:105px;height:392px;background:#d9d9d9"></div>
<div class="vl" style="left:1392px;top:105px;height:392px;background:#d9d9d9"></div>
<div class="hl" style="left:798px;top:496px;width:595px;background:#d9d9d9"></div>
<div class="tb" style="left:799px;top:114px;width:592px;height:355px;border-color:#86bfda">
<div class="hd" style="left:0px;top:0;width:32px;height:34px;padding-left:2px;">Вкл.</div>
<div class="hd" style="left:32px;top:0;width:76px;height:34px;">Номер</div>
<div class="hd" style="left:108px;top:0;width:39px;height:34px;">Серия</div>
<div class="hd" style="left:147px;top:0;width:61px;height:34px;text-align:left;padding-left:3px;">Дата<br>документа</div>
<div class="hd" style="left:208px;top:0;width:42px;height:34px;text-align:left;padding-left:3px;">Время<br>документа</div>
<div class="hd" style="left:250px;top:0;width:165px;height:34px;">Поставщик</div>
<div class="hd" style="left:415px;top:0;width:165px;height:34px;">Покупатель</div>
<div class="hd" style="left:580px;top:0;width:10px;height:34px;border-right:none"></div>
<svg style="left:27px;top:29px" width="4" height="4"><path d="M4 0V4H0Z" fill="#1e86c8"/></svg>
<div class="row" style="top:34px;width:580px;background:#fff">
<div class="vl" style="left:31px;top:0;height:20px;background:#e4e4e4"></div>
<div class="vl" style="left:107px;top:0;height:20px;background:#e4e4e4"></div>
<div class="vl" style="left:146px;top:0;height:20px;background:#e4e4e4"></div>
<div class="vl" style="left:207px;top:0;height:20px;background:#e4e4e4"></div>
<div class="vl" style="left:249px;top:0;height:20px;background:#e4e4e4"></div>
<div class="vl" style="left:414px;top:0;height:20px;background:#e4e4e4"></div>
<div class="vl" style="left:579px;top:0;height:20px;background:#e4e4e4"></div>
<div class="cb" style="left:9px;top:3px"></div>
<div class="c" style="left:35px;top:4px"><b>00250</b></div>
<div class="c" style="left:111px;top:4px">ПС</div>
<div class="c" style="left:147px;width:57px;text-align:right;top:4px"><b>13.01.25</b></div>
<div class="c" style="left:208px;width:38px;text-align:right;top:4px"><b>15:51</b></div>
<div class="c" style="left:253px;top:4px"><b>1</b>_Поставщик</div>
<div class="c" style="left:419px;top:4px">"Маркет Фьюжен" ООО</div>
</div>
<div class="row" style="top:55px;width:580px;background:#fff">
<div class="vl" style="left:31px;top:0;height:20px;background:#e4e4e4"></div>
<div class="vl" style="left:107px;top:0;height:20px;background:#e4e4e4"></div>
<div class="vl" style="left:146px;top:0;height:20px;background:#e4e4e4"></div>
<div class="vl" style="left:207px;top:0;height:20px;background:#e4e4e4"></div>
<div class="vl" style="left:249px;top:0;height:20px;background:#e4e4e4"></div>
<div class="vl" style="left:414px;top:0;height:20px;background:#e4e4e4"></div>
<div class="vl" style="left:579px;top:0;height:20px;background:#e4e4e4"></div>
<div class="cb" style="left:9px;top:3px"></div>
<div class="c" style="left:35px;top:4px"><b>00251</b></div>
<div class="c" style="left:111px;top:4px">ПС</div>
<div class="c" style="left:147px;width:57px;text-align:right;top:4px"><b>18.01.25</b></div>
<div class="c" style="left:208px;width:38px;text-align:right;top:4px"><b>15:52</b></div>
<div class="c" style="left:253px;top:4px"><b>1</b>_Поставщик</div>
<div class="c" style="left:419px;top:4px">"Маркет Фьюжен" ООО</div>
</div>
<div class="row" style="top:76px;width:580px;background:#fff">
<div class="vl" style="left:31px;top:0;height:20px;background:#e4e4e4"></div>
<div class="vl" style="left:107px;top:0;height:20px;background:#e4e4e4"></div>
<div class="vl" style="left:146px;top:0;height:20px;background:#e4e4e4"></div>
<div class="vl" style="left:207px;top:0;height:20px;background:#e4e4e4"></div>
<div class="vl" style="left:249px;top:0;height:20px;background:#e4e4e4"></div>
<div class="vl" style="left:414px;top:0;height:20px;background:#e4e4e4"></div>
<div class="vl" style="left:579px;top:0;height:20px;background:#e4e4e4"></div>
<div class="cb" style="left:9px;top:3px"></div>
<div class="c" style="left:35px;top:4px"><b>00252</b></div>
<div class="c" style="left:111px;top:4px">ПС</div>
<div class="c" style="left:147px;width:57px;text-align:right;top:4px"><b>23.01.25</b></div>
<div class="c" style="left:208px;width:38px;text-align:right;top:4px"><b>15:52</b></div>
<div class="c" style="left:253px;top:4px"><b>1</b>_Поставщик</div>
<div class="c" style="left:419px;top:4px">"Маркет Фьюжен" ООО</div>
</div>
<div class="row" style="top:97px;width:580px;background:#fff">
<div class="vl" style="left:31px;top:0;height:20px;background:#e4e4e4"></div>
<div class="vl" style="left:107px;top:0;height:20px;background:#e4e4e4"></div>
<div class="vl" style="left:146px;top:0;height:20px;background:#e4e4e4"></div>
<div class="vl" style="left:207px;top:0;height:20px;background:#e4e4e4"></div>
<div class="vl" style="left:249px;top:0;height:20px;background:#e4e4e4"></div>
<div class="vl" style="left:414px;top:0;height:20px;background:#e4e4e4"></div>
<div class="vl" style="left:579px;top:0;height:20px;background:#e4e4e4"></div>
<div class="a" style="left:0;top:0;width:31px;height:20px;background:#dcdcdc"></div>
<div class="cb" style="left:9px;top:3px"></div>
<svg style="left:11px;top:6px" width="10" height="9" viewBox="0 0 10 9"><path d="M0.8 4.5L3.6 7.6L9.2 0.8" fill="none" stroke="#2a8fe0" stroke-width="1.4"/></svg>
<div class="c" style="left:35px;top:4px"><b>00253</b></div>
<div class="c" style="left:111px;top:4px">ПС</div>
<div class="c" style="left:147px;width:57px;text-align:right;top:4px"><b>28.01.25</b></div>
<div class="c" style="left:208px;width:38px;text-align:right;top:4px"><b>15:53</b></div>
<div class="c" style="left:253px;top:4px"><b>1</b>_Поставщик</div>
<div class="c" style="left:419px;top:4px">"Маркет Фьюжен" ООО</div>
</div>
<div class="row" style="top:118px;width:580px;background:#fff">
<div class="vl" style="left:31px;top:0;height:20px;background:#e4e4e4"></div>
<div class="vl" style="left:107px;top:0;height:20px;background:#e4e4e4"></div>
<div class="vl" style="left:146px;top:0;height:20px;background:#e4e4e4"></div>
<div class="vl" style="left:207px;top:0;height:20px;background:#e4e4e4"></div>
<div class="vl" style="left:249px;top:0;height:20px;background:#e4e4e4"></div>
<div class="vl" style="left:414px;top:0;height:20px;background:#e4e4e4"></div>
<div class="vl" style="left:579px;top:0;height:20px;background:#e4e4e4"></div>
<div class="cb" style="left:9px;top:3px"></div>
<div class="c" style="left:35px;top:4px"><b>00254</b></div>
<div class="c" style="left:111px;top:4px">ПС</div>
<div class="c" style="left:147px;width:57px;text-align:right;top:4px"><b>31.01.25</b></div>
<div class="c" style="left:208px;width:38px;text-align:right;top:4px"><b>15:54</b></div>
<div class="c" style="left:253px;top:4px"><b>1</b>_Поставщик</div>
<div class="c" style="left:419px;top:4px">"Маркет Фьюжен" ООО</div>
</div>
<div class="row" style="top:139px;width:580px;background:#fff">
<div class="vl" style="left:31px;top:0;height:20px;background:#e4e4e4"></div>
<div class="vl" style="left:107px;top:0;height:20px;background:#e4e4e4"></div>
<div class="vl" style="left:146px;top:0;height:20px;background:#e4e4e4"></div>
<div class="vl" style="left:207px;top:0;height:20px;background:#e4e4e4"></div>
<div class="vl" style="left:249px;top:0;height:20px;background:#e4e4e4"></div>
<div class="vl" style="left:414px;top:0;height:20px;background:#e4e4e4"></div>
<div class="vl" style="left:579px;top:0;height:20px;background:#e4e4e4"></div>
<div class="cb" style="left:9px;top:3px"></div>
<div class="c" style="left:35px;top:4px"><b>00012</b></div>
<div class="c" style="left:111px;top:4px">ПС</div>
<div class="c" style="left:147px;width:57px;text-align:right;top:4px"><b>03.01.25</b></div>
<div class="c" style="left:208px;width:38px;text-align:right;top:4px"><b>15:55</b></div>
<div class="c" style="left:253px;top:4px"><b>2</b>_Поставщик</div>
<div class="c" style="left:419px;top:4px">"Маркет Фьюжен" ООО</div>
</div>
<div class="row" style="top:160px;width:580px;background:#fff">
<div class="vl" style="left:31px;top:0;height:20px;background:#e4e4e4"></div>
<div class="vl" style="left:107px;top:0;height:20px;background:#e4e4e4"></div>
<div class="vl" style="left:146px;top:0;height:20px;background:#e4e4e4"></div>
<div class="vl" style="left:207px;top:0;height:20px;background:#e4e4e4"></div>
<div class="vl" style="left:249px;top:0;height:20px;background:#e4e4e4"></div>
<div class="vl" style="left:414px;top:0;height:20px;background:#e4e4e4"></div>
<div class="vl" style="left:579px;top:0;height:20px;background:#e4e4e4"></div>
<div class="cb" style="left:9px;top:3px"></div>
<div class="c" style="left:35px;top:4px"><b>00256</b></div>
<div class="c" style="left:111px;top:4px">ПС</div>
<div class="c" style="left:147px;width:57px;text-align:right;top:4px"><b>07.01.25</b></div>
<div class="c" style="left:208px;width:38px;text-align:right;top:4px"><b>15:55</b></div>
<div class="c" style="left:253px;top:4px"><b>2</b>_Поставщик</div>
<div class="c" style="left:419px;top:4px">"Маркет Фьюжен" ООО</div>
</div>
<div class="row" style="top:181px;width:580px;background:#fff">
<div class="vl" style="left:31px;top:0;height:20px;background:#e4e4e4"></div>
<div class="vl" style="left:107px;top:0;height:20px;background:#e4e4e4"></div>
<div class="vl" style="left:146px;top:0;height:20px;background:#e4e4e4"></div>
<div class="vl" style="left:207px;top:0;height:20px;background:#e4e4e4"></div>
<div class="vl" style="left:249px;top:0;height:20px;background:#e4e4e4"></div>
<div class="vl" style="left:414px;top:0;height:20px;background:#e4e4e4"></div>
<div class="vl" style="left:579px;top:0;height:20px;background:#e4e4e4"></div>
<div class="cb" style="left:9px;top:3px"></div>
<div class="c" style="left:35px;top:4px"><b>00257</b></div>
<div class="c" style="left:111px;top:4px">ПС</div>
<div class="c" style="left:147px;width:57px;text-align:right;top:4px"><b>11.01.25</b></div>
<div class="c" style="left:208px;width:38px;text-align:right;top:4px"><b>15:56</b></div>
<div class="c" style="left:253px;top:4px"><b>2</b>_Поставщик</div>
<div class="c" style="left:419px;top:4px">"Маркет Фьюжен" ООО</div>
</div>
<div class="row" style="top:202px;width:580px;background:#fff">
<div class="vl" style="left:31px;top:0;height:20px;background:#e4e4e4"></div>
<div class="vl" style="left:107px;top:0;height:20px;background:#e4e4e4"></div>
<div class="vl" style="left:146px;top:0;height:20px;background:#e4e4e4"></div>
<div class="vl" style="left:207px;top:0;height:20px;background:#e4e4e4"></div>
<div class="vl" style="left:249px;top:0;height:20px;background:#e4e4e4"></div>
<div class="vl" style="left:414px;top:0;height:20px;background:#e4e4e4"></div>
<div class="vl" style="left:579px;top:0;height:20px;background:#e4e4e4"></div>
<div class="cb" style="left:9px;top:3px"></div>
<div class="c" style="left:35px;top:4px"><b>00258</b></div>
<div class="c" style="left:111px;top:4px">ПС</div>
<div class="c" style="left:147px;width:57px;text-align:right;top:4px"><b>15.01.25</b></div>
<div class="c" style="left:208px;width:38px;text-align:right;top:4px"><b>15:57</b></div>
<div class="c" style="left:253px;top:4px"><b>2</b>_Поставщик</div>
<div class="c" style="left:419px;top:4px">"Маркет Фьюжен" ООО</div>
</div>
<div class="row" style="top:223px;width:580px;background:#fff">
<div class="vl" style="left:31px;top:0;height:20px;background:#e4e4e4"></div>
<div class="vl" style="left:107px;top:0;height:20px;background:#e4e4e4"></div>
<div class="vl" style="left:146px;top:0;height:20px;background:#e4e4e4"></div>
<div class="vl" style="left:207px;top:0;height:20px;background:#e4e4e4"></div>
<div class="vl" style="left:249px;top:0;height:20px;background:#e4e4e4"></div>
<div class="vl" style="left:414px;top:0;height:20px;background:#e4e4e4"></div>
<div class="vl" style="left:579px;top:0;height:20px;background:#e4e4e4"></div>
<div class="cb" style="left:9px;top:3px"></div>
<div class="c" style="left:35px;top:4px"><b>00259</b></div>
<div class="c" style="left:111px;top:4px">ПС</div>
<div class="c" style="left:147px;width:57px;text-align:right;top:4px"><b>19.01.25</b></div>
<div class="c" style="left:208px;width:38px;text-align:right;top:4px"><b>15:57</b></div>
<div class="c" style="left:253px;top:4px"><b>2</b>_Поставщик</div>
<div class="c" style="left:419px;top:4px">"Маркет Фьюжен" ООО</div>
</div>
<div class="row" style="top:244px;width:580px;background:#fff">
<div class="vl" style="left:31px;top:0;height:20px;background:#e4e4e4"></div>
<div class="vl" style="left:107px;top:0;height:20px;background:#e4e4e4"></div>
<div class="vl" style="left:146px;top:0;height:20px;background:#e4e4e4"></div>
<div class="vl" style="left:207px;top:0;height:20px;background:#e4e4e4"></div>
<div class="vl" style="left:249px;top:0;height:20px;background:#e4e4e4"></div>
<div class="vl" style="left:414px;top:0;height:20px;background:#e4e4e4"></div>
<div class="vl" style="left:579px;top:0;height:20px;background:#e4e4e4"></div>
<div class="cb" style="left:9px;top:3px"></div>
<div class="c" style="left:35px;top:4px"><b>00260</b></div>
<div class="c" style="left:111px;top:4px">ПС</div>
<div class="c" style="left:147px;width:57px;text-align:right;top:4px"><b>23.01.25</b></div>
<div class="c" style="left:208px;width:38px;text-align:right;top:4px"><b>15:58</b></div>
<div class="c" style="left:253px;top:4px"><b>2</b>_Поставщик</div>
<div class="c" style="left:419px;top:4px">"Маркет Фьюжен" ООО</div>
</div>
<div class="row" style="top:265px;width:580px;background:#fff">
<div class="vl" style="left:31px;top:0;height:20px;background:#e4e4e4"></div>
<div class="vl" style="left:107px;top:0;height:20px;background:#e4e4e4"></div>
<div class="vl" style="left:146px;top:0;height:20px;background:#e4e4e4"></div>
<div class="vl" style="left:207px;top:0;height:20px;background:#e4e4e4"></div>
<div class="vl" style="left:249px;top:0;height:20px;background:#e4e4e4"></div>
<div class="vl" style="left:414px;top:0;height:20px;background:#e4e4e4"></div>
<div class="vl" style="left:579px;top:0;height:20px;background:#e4e4e4"></div>
<div class="cb" style="left:9px;top:3px"></div>
<div class="c" style="left:35px;top:4px"><b>00261</b></div>
<div class="c" style="left:111px;top:4px">ПС</div>
<div class="c" style="left:147px;width:57px;text-align:right;top:4px"><b>27.01.25</b></div>
<div class="c" style="left:208px;width:38px;text-align:right;top:4px"><b>15:59</b></div>
<div class="c" style="left:253px;top:4px"><b>2</b>_Поставщик</div>
<div class="c" style="left:419px;top:4px">"Маркет Фьюжен" ООО</div>
</div>
<div class="row" style="top:286px;width:580px;background:#d4e5eb">
<div class="vl" style="left:31px;top:0;height:20px;background:#e4e4e4"></div>
<div class="vl" style="left:107px;top:0;height:20px;background:#e4e4e4"></div>
<div class="vl" style="left:146px;top:0;height:20px;background:#e4e4e4"></div>
<div class="vl" style="left:207px;top:0;height:20px;background:#e4e4e4"></div>
<div class="vl" style="left:249px;top:0;height:20px;background:#e4e4e4"></div>
<div class="vl" style="left:414px;top:0;height:20px;background:#e4e4e4"></div>
<div class="vl" style="left:579px;top:0;height:20px;background:#e4e4e4"></div>
<div class="a" style="left:0;top:0;width:31px;height:20px;background:#f2f2f2;border:1px solid #3a8fc0"></div>
<div class="cb" style="left:9px;top:3px"></div>
<div class="c" style="left:35px;top:4px"><b>00262</b></div>
<div class="c" style="left:111px;top:4px">ПС</div>
<div class="c" style="left:147px;width:57px;text-align:right;top:4px"><b>31.01.25</b></div>
<div class="c" style="left:208px;width:38px;text-align:right;top:4px"><b>15:59</b></div>
<div class="c" style="left:253px;top:4px"><b>2</b>_Поставщик</div>
<div class="c" style="left:419px;top:4px">"Маркет Фьюжен" ООО</div>
</div>
<div class="row" style="top:307px;width:580px;background:#fff">
<div class="vl" style="left:31px;top:0;height:20px;background:#e4e4e4"></div>
<div class="vl" style="left:107px;top:0;height:20px;background:#e4e4e4"></div>
<div class="vl" style="left:146px;top:0;height:20px;background:#e4e4e4"></div>
<div class="vl" style="left:207px;top:0;height:20px;background:#e4e4e4"></div>
<div class="vl" style="left:249px;top:0;height:20px;background:#e4e4e4"></div>
<div class="vl" style="left:414px;top:0;height:20px;background:#e4e4e4"></div>
<div class="vl" style="left:579px;top:0;height:20px;background:#e4e4e4"></div>
<div class="cb" style="left:9px;top:3px"></div>
<div class="c" style="left:35px;top:4px"><b>00263</b></div>
<div class="c" style="left:111px;top:4px">ПС</div>
<div class="c" style="left:147px;width:57px;text-align:right;top:4px"><b>03.01.25</b></div>
<div class="c" style="left:208px;width:38px;text-align:right;top:4px"><b>16:00</b></div>
<div class="c" style="left:253px;top:4px"><b>3</b>_Поставщик</div>
<div class="c" style="left:419px;top:4px">"Маркет Фьюжен" ООО</div>
</div>
<div class="row" style="top:328px;width:580px;background:#fff">
<div class="vl" style="left:31px;top:0;height:20px;background:#e4e4e4"></div>
<div class="vl" style="left:107px;top:0;height:20px;background:#e4e4e4"></div>
<div class="vl" style="left:146px;top:0;height:20px;background:#e4e4e4"></div>
<div class="vl" style="left:207px;top:0;height:20px;background:#e4e4e4"></div>
<div class="vl" style="left:249px;top:0;height:20px;background:#e4e4e4"></div>
<div class="vl" style="left:414px;top:0;height:20px;background:#e4e4e4"></div>
<div class="vl" style="left:579px;top:0;height:20px;background:#e4e4e4"></div>
<div class="cb" style="left:9px;top:3px"></div>
<div class="c" style="left:35px;top:4px"><b>00264</b></div>
<div class="c" style="left:111px;top:4px">ПС</div>
<div class="c" style="left:147px;width:57px;text-align:right;top:4px"><b>10.01.25</b></div>
<div class="c" style="left:208px;width:38px;text-align:right;top:4px"><b>16:02</b></div>
<div class="c" style="left:253px;top:4px"><b>3</b>_Поставщик</div>
<div class="c" style="left:419px;top:4px">"Маркет Фьюжен" ООО</div>
</div>
<div class="row" style="top:349px;width:580px;background:#fff">
<div class="vl" style="left:31px;top:0;height:20px;background:#e4e4e4"></div>
<div class="vl" style="left:107px;top:0;height:20px;background:#e4e4e4"></div>
<div class="vl" style="left:146px;top:0;height:20px;background:#e4e4e4"></div>
<div class="vl" style="left:207px;top:0;height:20px;background:#e4e4e4"></div>
<div class="vl" style="left:249px;top:0;height:20px;background:#e4e4e4"></div>
<div class="vl" style="left:414px;top:0;height:20px;background:#e4e4e4"></div>
<div class="vl" style="left:579px;top:0;height:20px;background:#e4e4e4"></div>
<div class="cb" style="left:9px;top:3px"></div>
<div class="c" style="left:35px;top:4px"><b>00265</b></div>
<div class="c" style="left:111px;top:4px">ПС</div>
<div class="c" style="left:147px;width:57px;text-align:right;top:4px"><b>14.01.25</b></div>
<div class="c" style="left:208px;width:38px;text-align:right;top:4px"><b>16:03</b></div>
<div class="c" style="left:253px;top:4px"><b>3</b>_Поставщик</div>
<div class="c" style="left:419px;top:4px">"Маркет Фьюжен" ООО</div>
</div>
<div class="a" style="left:580px;top:34px;width:10px;height:320px;background:#f4f4f4"></div>
<div class="a" style="left:581px;top:236px;width:9px;height:49px;background:#d2d2d2"></div>
</div>
<svg style="left:804px;top:470px" width="190" height="24" viewBox="0 0 190 24" fill="none"><path d="M22.5 1.5V22.5" stroke="#d6d6d6" stroke-width="1"/><path d="M51.5 1.5V22.5" stroke="#d6d6d6" stroke-width="1"/><path d="M80.5 1.5V22.5" stroke="#d6d6d6" stroke-width="1"/><path d="M131.5 1.5V22.5" stroke="#d6d6d6" stroke-width="1"/><path d="M160.5 1.5V22.5" stroke="#d6d6d6" stroke-width="1"/>
<rect x="0.65" y="4.65" width="14.9" height="14.9" rx="1" fill="#f7f3f1" stroke="#2b2b2b" stroke-width="1.3"/>
<path d="M5.6 5.2V19M10.5 5.2V19M1.2 9.4H15M1.2 14.4H15" stroke="#3bb3e8" stroke-width="1.2"/>
<path d="M29.1 6.5H44.7M33.4 14.5H40.7" stroke="#2b2b2b" stroke-width="1.25"/>
<path d="M31.3 10.5H42.6M35.2 18.5H38.9" stroke="#3bb3e8" stroke-width="1.25"/>
<g transform="translate(65.9 11.9)"><path d="M-1.40 -7.57L1.40 -7.57L1.47 -5.30L2.71 -4.79L4.36 -6.35L6.35 -4.36L4.79 -2.71L5.30 -1.47L7.57 -1.40L7.57 1.40L5.30 1.47L4.79 2.71L6.35 4.36L4.36 6.35L2.71 4.79L1.47 5.30L1.40 7.57L-1.40 7.57L-1.47 5.30L-2.71 4.79L-4.36 6.35L-6.35 4.36L-4.79 2.71L-5.30 1.47L-7.57 1.40L-7.57 -1.40L-5.30 -1.47L-4.79 -2.71L-6.35 -4.36L-4.36 -6.35L-2.71 -4.79L-1.47 -5.30Z" stroke="#2b2b2b" stroke-width="1.2" stroke-linejoin="round"/><circle r="2.5" stroke="#3bb3e8" stroke-width="1.2"/></g>
<path d="M93.4 6.5H102.5M93.4 12.4H102.5M93.4 18.4H102.5" stroke="#2b2b2b" stroke-width="1.25"/>
<path d="M88.3 5L89.3 4.2V8M88.2 10.6Q89.2 9.8 89.9 10.7Q90 11.6 88.2 13.8H90.1M88.2 16.3H89.9L89 17.8Q90.3 18.2 89.8 19.4Q89.2 20.2 88.1 19.8" stroke="#3bb3e8" stroke-width="0.95"/>
<path d="M109.2 5.4H124.7M109.2 9.6H124.7M109.2 13.6H115.6M109.2 17.7H115.6" stroke="#2b2b2b" stroke-width="1.25"/>
<path d="M118.3 15.6H124.7M121.5 12.4V18.8" stroke="#3bb3e8" stroke-width="1.25"/>
<path d="M144.5 7.4H140.4a1.6 1.6 0 0 0 -1.6 1.6V17.4a1.6 1.6 0 0 0 1.6 1.6H148.9a1.6 1.6 0 0 0 1.6 -1.6V13.5" stroke="#505050" stroke-width="1.5"/>
<path d="M145.2 12.4L152.9 5M146.8 4.7H153.2V11.1" stroke="#3bb3e8" stroke-width="1.3"/>
<path d="M169.7 16.5H167.3V7.4H177.4M174.7 4.6L177.8 7.4L174.7 10.3" stroke="#2b2b2b" stroke-width="1.3"/>
<path d="M180.8 7.4H182.8V16.1H172.6M175.1 13.3L172.2 16.1L175.1 19.2" stroke="#3bb3e8" stroke-width="1.3"/>
</svg>
<div class="hl" style="left:798px;top:505px;width:595px;background:#d9d9d9"></div>
<div class="lg" style="left:803px;top:499px"><svg style="left:1.7px;top:2px" width="10" height="10" viewBox="0 0 10 10"><circle cx="5" cy="5" r="4.2" fill="none" stroke="#9a9a9a" stroke-width="1"/><path d="M2.8 5H7.2" stroke="#9a9a9a" stroke-width="1"/></svg><span style="margin-left:13px">Строка накладной (польз.) (закупка)</span></div>
<div class="vl" style="left:797px;top:505px;height:392px;background:#d9d9d9"></div>
<div class="vl" style="left:1392px;top:505px;height:392px;background:#d9d9d9"></div>
<div class="hl" style="left:798px;top:896px;width:595px;background:#d9d9d9"></div>
<div class="tb" style="left:799px;top:514px;width:592px;height:355px">
<div class="hd" style="left:0px;top:0;width:27px;height:34px;text-align:left;padding-left:3px;">Вкл.</div>
<div class="hd" style="left:27px;top:0;width:57px;height:34px;text-align:left;padding-left:3px;">Номер<br>строки</div>
<div class="hd" style="left:84px;top:0;width:107px;height:34px;">Штрихкод</div>
<div class="hd" style="left:191px;top:0;width:263px;height:34px;">Наименование</div>
<div class="hd" style="left:454px;top:0;width:32px;height:34px;text-align:left;padding-left:3px;">Ед.<br>изм.</div>
<div class="hd" style="left:486px;top:0;width:51px;height:34px;">Кол-во</div>
<div class="hd" style="left:537px;top:0;width:51px;height:34px;">Цена</div>
<div class="hd" style="left:588px;top:0;width:3px;height:34px;border-right:none"></div>
<svg style="left:22px;top:29px" width="4" height="4"><path d="M4 0V4H0Z" fill="#1e86c8"/></svg>
<div class="row" style="top:34px;width:588px;background:#d4e5eb">
<div class="vl" style="left:26px;top:0;height:20px;background:#e4e4e4"></div>
<div class="vl" style="left:83px;top:0;height:20px;background:#e4e4e4"></div>
<div class="vl" style="left:190px;top:0;height:20px;background:#e4e4e4"></div>
<div class="vl" style="left:453px;top:0;height:20px;background:#e4e4e4"></div>
<div class="vl" style="left:485px;top:0;height:20px;background:#e4e4e4"></div>
<div class="vl" style="left:536px;top:0;height:20px;background:#e4e4e4"></div>
<div class="vl" style="left:587px;top:0;height:20px;background:#e4e4e4"></div>
<div class="a" style="left:0;top:0;width:27px;height:20px;background:#f2f2f2"></div>
<div class="cb" style="left:7px;top:3px"></div>
<div class="c" style="left:27px;width:52.5px;text-align:right;top:4px"><b>1</b></div>
<div class="c" style="left:87px;top:4px"><b>55500</b></div>
<div class="c" style="left:194px;top:4px;width:256px">Бедро цыплят-бройлеров охлажденное Бор...</div>
<div class="c" style="left:457px;top:4px">кг</div>
<div class="c" style="left:486px;width:46.5px;text-align:right;top:4px"><b>5</b></div>
<div class="c" style="left:537px;width:46px;text-align:right;top:4px"><b>186,91</b></div>
</div>
<div class="row" style="top:55px;width:588px;background:#fff">
<div class="vl" style="left:26px;top:0;height:20px;background:#e4e4e4"></div>
<div class="vl" style="left:83px;top:0;height:20px;background:#e4e4e4"></div>
<div class="vl" style="left:190px;top:0;height:20px;background:#e4e4e4"></div>
<div class="vl" style="left:453px;top:0;height:20px;background:#e4e4e4"></div>
<div class="vl" style="left:485px;top:0;height:20px;background:#e4e4e4"></div>
<div class="vl" style="left:536px;top:0;height:20px;background:#e4e4e4"></div>
<div class="vl" style="left:587px;top:0;height:20px;background:#e4e4e4"></div>
<div class="cb" style="left:7px;top:3px"></div>
<div class="c" style="left:27px;width:52.5px;text-align:right;top:4px"><b>2</b></div>
<div class="c" style="left:87px;top:4px"><b>65453</b></div>
<div class="c" style="left:194px;top:4px;width:256px">Грудка цыплят-бройлеров охлажденная Бор...</div>
<div class="c" style="left:457px;top:4px">кг</div>
<div class="c" style="left:486px;width:46.5px;text-align:right;top:4px"><b>6</b></div>
<div class="c" style="left:537px;width:46px;text-align:right;top:4px"><b>242,18</b></div>
</div>
<div class="row" style="top:76px;width:588px;background:#fff">
<div class="vl" style="left:26px;top:0;height:20px;background:#e4e4e4"></div>
<div class="vl" style="left:83px;top:0;height:20px;background:#e4e4e4"></div>
<div class="vl" style="left:190px;top:0;height:20px;background:#e4e4e4"></div>
<div class="vl" style="left:453px;top:0;height:20px;background:#e4e4e4"></div>
<div class="vl" style="left:485px;top:0;height:20px;background:#e4e4e4"></div>
<div class="vl" style="left:536px;top:0;height:20px;background:#e4e4e4"></div>
<div class="vl" style="left:587px;top:0;height:20px;background:#e4e4e4"></div>
<div class="cb" style="left:7px;top:3px"></div>
<div class="c" style="left:27px;width:52.5px;text-align:right;top:4px"><b>3</b></div>
<div class="c" style="left:87px;top:4px"><b>35494</b></div>
<div class="c" style="left:194px;top:4px;width:256px">Грудная часть говяжья охлажденная Борисо...</div>
<div class="c" style="left:457px;top:4px">кг</div>
<div class="c" style="left:486px;width:46.5px;text-align:right;top:4px"><b>10</b></div>
<div class="c" style="left:537px;width:46px;text-align:right;top:4px"><b>377,95</b></div>
</div>
<div class="row" style="top:97px;width:588px;background:#fff">
<div class="vl" style="left:26px;top:0;height:20px;background:#e4e4e4"></div>
<div class="vl" style="left:83px;top:0;height:20px;background:#e4e4e4"></div>
<div class="vl" style="left:190px;top:0;height:20px;background:#e4e4e4"></div>
<div class="vl" style="left:453px;top:0;height:20px;background:#e4e4e4"></div>
<div class="vl" style="left:485px;top:0;height:20px;background:#e4e4e4"></div>
<div class="vl" style="left:536px;top:0;height:20px;background:#e4e4e4"></div>
<div class="vl" style="left:587px;top:0;height:20px;background:#e4e4e4"></div>
<div class="cb" style="left:7px;top:3px"></div>
<div class="c" style="left:27px;width:52.5px;text-align:right;top:4px"><b>4</b></div>
<div class="c" style="left:87px;top:4px"><b>89654</b></div>
<div class="c" style="left:194px;top:4px;width:256px">Колбаски Говяжьи Черкизово</div>
<div class="c" style="left:457px;top:4px">кг</div>
<div class="c" style="left:486px;width:46.5px;text-align:right;top:4px"><b>5</b></div>
<div class="c" style="left:537px;width:46px;text-align:right;top:4px"><b>405,18</b></div>
</div>
<div class="row" style="top:118px;width:588px;background:#fff">
<div class="vl" style="left:26px;top:0;height:20px;background:#e4e4e4"></div>
<div class="vl" style="left:83px;top:0;height:20px;background:#e4e4e4"></div>
<div class="vl" style="left:190px;top:0;height:20px;background:#e4e4e4"></div>
<div class="vl" style="left:453px;top:0;height:20px;background:#e4e4e4"></div>
<div class="vl" style="left:485px;top:0;height:20px;background:#e4e4e4"></div>
<div class="vl" style="left:536px;top:0;height:20px;background:#e4e4e4"></div>
<div class="vl" style="left:587px;top:0;height:20px;background:#e4e4e4"></div>
<div class="cb" style="left:7px;top:3px"></div>
<div class="c" style="left:27px;width:52.5px;text-align:right;top:4px"><b>5</b></div>
<div class="c" style="left:87px;top:4px"><b>56478</b></div>
<div class="c" style="left:194px;top:4px;width:256px">Колбаски Куриные Черкизово</div>
<div class="c" style="left:457px;top:4px">кг</div>
<div class="c" style="left:486px;width:46.5px;text-align:right;top:4px"><b>7</b></div>
<div class="c" style="left:537px;width:46px;text-align:right;top:4px"><b>375,17</b></div>
</div>
<div class="row" style="top:139px;width:588px;background:#fff">
<div class="vl" style="left:26px;top:0;height:20px;background:#e4e4e4"></div>
<div class="vl" style="left:83px;top:0;height:20px;background:#e4e4e4"></div>
<div class="vl" style="left:190px;top:0;height:20px;background:#e4e4e4"></div>
<div class="vl" style="left:453px;top:0;height:20px;background:#e4e4e4"></div>
<div class="vl" style="left:485px;top:0;height:20px;background:#e4e4e4"></div>
<div class="vl" style="left:536px;top:0;height:20px;background:#e4e4e4"></div>
<div class="vl" style="left:587px;top:0;height:20px;background:#e4e4e4"></div>
<div class="cb" style="left:7px;top:3px"></div>
<div class="c" style="left:27px;width:52.5px;text-align:right;top:4px"><b>6</b></div>
<div class="c" style="left:87px;top:4px"><b>14789</b></div>
<div class="c" style="left:194px;top:4px;width:256px">Колбаски Свиные Черкизово</div>
<div class="c" style="left:457px;top:4px">кг</div>
<div class="c" style="left:486px;width:46.5px;text-align:right;top:4px"><b>8</b></div>
<div class="c" style="left:537px;width:46px;text-align:right;top:4px"><b>386,82</b></div>
</div>
<div class="row" style="top:160px;width:588px;background:#fff">
<div class="vl" style="left:26px;top:0;height:20px;background:#e4e4e4"></div>
<div class="vl" style="left:83px;top:0;height:20px;background:#e4e4e4"></div>
<div class="vl" style="left:190px;top:0;height:20px;background:#e4e4e4"></div>
<div class="vl" style="left:453px;top:0;height:20px;background:#e4e4e4"></div>
<div class="vl" style="left:485px;top:0;height:20px;background:#e4e4e4"></div>
<div class="vl" style="left:536px;top:0;height:20px;background:#e4e4e4"></div>
<div class="vl" style="left:587px;top:0;height:20px;background:#e4e4e4"></div>
<div class="cb" style="left:7px;top:3px"></div>
<div class="c" style="left:27px;width:52.5px;text-align:right;top:4px"><b>7</b></div>
<div class="c" style="left:87px;top:4px"><b>55499</b></div>
<div class="c" style="left:194px;top:4px;width:256px">Крыло цыплят-бройлеров охлажденное Бо...</div>
<div class="c" style="left:457px;top:4px">кг</div>
<div class="c" style="left:486px;width:46.5px;text-align:right;top:4px"><b>5</b></div>
<div class="c" style="left:537px;width:46px;text-align:right;top:4px"><b>220,15</b></div>
</div>
<div class="row" style="top:181px;width:588px;background:#fff">
<div class="vl" style="left:26px;top:0;height:20px;background:#e4e4e4"></div>
<div class="vl" style="left:83px;top:0;height:20px;background:#e4e4e4"></div>
<div class="vl" style="left:190px;top:0;height:20px;background:#e4e4e4"></div>
<div class="vl" style="left:453px;top:0;height:20px;background:#e4e4e4"></div>
<div class="vl" style="left:485px;top:0;height:20px;background:#e4e4e4"></div>
<div class="vl" style="left:536px;top:0;height:20px;background:#e4e4e4"></div>
<div class="vl" style="left:587px;top:0;height:20px;background:#e4e4e4"></div>
<div class="cb" style="left:7px;top:3px"></div>
<div class="c" style="left:27px;width:52.5px;text-align:right;top:4px"><b>8</b></div>
<div class="c" style="left:87px;top:4px"><b>25653</b></div>
<div class="c" style="left:194px;top:4px;width:256px">Лопатка свиная охлажденная Белатмит</div>
<div class="c" style="left:457px;top:4px">кг</div>
<div class="c" style="left:486px;width:46.5px;text-align:right;top:4px"><b>5</b></div>
<div class="c" style="left:537px;width:46px;text-align:right;top:4px"><b>377,27</b></div>
</div>
<div class="row" style="top:202px;width:588px;background:#fff">
<div class="vl" style="left:26px;top:0;height:20px;background:#e4e4e4"></div>
<div class="vl" style="left:83px;top:0;height:20px;background:#e4e4e4"></div>
<div class="vl" style="left:190px;top:0;height:20px;background:#e4e4e4"></div>
<div class="vl" style="left:453px;top:0;height:20px;background:#e4e4e4"></div>
<div class="vl" style="left:485px;top:0;height:20px;background:#e4e4e4"></div>
<div class="vl" style="left:536px;top:0;height:20px;background:#e4e4e4"></div>
<div class="vl" style="left:587px;top:0;height:20px;background:#e4e4e4"></div>
<div class="cb" style="left:7px;top:3px"></div>
<div class="c" style="left:27px;width:52.5px;text-align:right;top:4px"><b>9</b></div>
<div class="c" style="left:87px;top:4px"><b>35493</b></div>
<div class="c" style="left:194px;top:4px;width:256px">Тазобедренная часть говяжья охлажденная ...</div>
<div class="c" style="left:457px;top:4px">кг</div>
<div class="c" style="left:486px;width:46.5px;text-align:right;top:4px"><b>10</b></div>
<div class="c" style="left:537px;width:46px;text-align:right;top:4px"><b>395,45</b></div>
</div>
<div class="row" style="top:223px;width:588px;background:#fff">
<div class="vl" style="left:26px;top:0;height:20px;background:#e4e4e4"></div>
<div class="vl" style="left:83px;top:0;height:20px;background:#e4e4e4"></div>
<div class="vl" style="left:190px;top:0;height:20px;background:#e4e4e4"></div>
<div class="vl" style="left:453px;top:0;height:20px;background:#e4e4e4"></div>
<div class="vl" style="left:485px;top:0;height:20px;background:#e4e4e4"></div>
<div class="vl" style="left:536px;top:0;height:20px;background:#e4e4e4"></div>
<div class="vl" style="left:587px;top:0;height:20px;background:#e4e4e4"></div>
<div class="cb" style="left:7px;top:3px"></div>
<div class="c" style="left:27px;width:52.5px;text-align:right;top:4px"><b>10</b></div>
<div class="c" style="left:87px;top:4px"><b>34618</b></div>
<div class="c" style="left:194px;top:4px;width:256px">Тазобедренная часть свиная охлажденная Б...</div>
<div class="c" style="left:457px;top:4px">кг</div>
<div class="c" style="left:486px;width:46.5px;text-align:right;top:4px"><b>10</b></div>
<div class="c" style="left:537px;width:46px;text-align:right;top:4px"><b>364,5</b></div>
</div>
<div class="row" style="top:244px;width:588px;background:#fff">
<div class="vl" style="left:26px;top:0;height:20px;background:#e4e4e4"></div>
<div class="vl" style="left:83px;top:0;height:20px;background:#e4e4e4"></div>
<div class="vl" style="left:190px;top:0;height:20px;background:#e4e4e4"></div>
<div class="vl" style="left:453px;top:0;height:20px;background:#e4e4e4"></div>
<div class="vl" style="left:485px;top:0;height:20px;background:#e4e4e4"></div>
<div class="vl" style="left:536px;top:0;height:20px;background:#e4e4e4"></div>
<div class="vl" style="left:587px;top:0;height:20px;background:#e4e4e4"></div>
<div class="cb" style="left:7px;top:3px"></div>
<div class="c" style="left:27px;width:52.5px;text-align:right;top:4px"><b>11</b></div>
<div class="c" style="left:87px;top:4px"><b>81622</b></div>
<div class="c" style="left:194px;top:4px;width:256px">Шея свиная охлажденная вес Борисовский ...</div>
<div class="c" style="left:457px;top:4px">кг</div>
<div class="c" style="left:486px;width:46.5px;text-align:right;top:4px"><b>8</b></div>
<div class="c" style="left:537px;width:46px;text-align:right;top:4px"><b>390,91</b></div>
</div>
</div>
<svg style="left:804px;top:870px" width="190" height="24" viewBox="0 0 190 24" fill="none"><path d="M22.5 1.5V22.5" stroke="#d6d6d6" stroke-width="1"/><path d="M51.5 1.5V22.5" stroke="#d6d6d6" stroke-width="1"/><path d="M80.5 1.5V22.5" stroke="#d6d6d6" stroke-width="1"/><path d="M131.5 1.5V22.5" stroke="#d6d6d6" stroke-width="1"/><path d="M160.5 1.5V22.5" stroke="#d6d6d6" stroke-width="1"/>
<rect x="0.65" y="4.65" width="14.9" height="14.9" rx="1" fill="#f7f3f1" stroke="#2b2b2b" stroke-width="1.3"/>
<path d="M5.6 5.2V19M10.5 5.2V19M1.2 9.4H15M1.2 14.4H15" stroke="#3bb3e8" stroke-width="1.2"/>
<path d="M29.1 6.5H44.7M33.4 14.5H40.7" stroke="#2b2b2b" stroke-width="1.25"/>
<path d="M31.3 10.5H42.6M35.2 18.5H38.9" stroke="#3bb3e8" stroke-width="1.25"/>
<g transform="translate(65.9 11.9)"><path d="M-1.40 -7.57L1.40 -7.57L1.47 -5.30L2.71 -4.79L4.36 -6.35L6.35 -4.36L4.79 -2.71L5.30 -1.47L7.57 -1.40L7.57 1.40L5.30 1.47L4.79 2.71L6.35 4.36L4.36 6.35L2.71 4.79L1.47 5.30L1.40 7.57L-1.40 7.57L-1.47 5.30L-2.71 4.79L-4.36 6.35L-6.35 4.36L-4.79 2.71L-5.30 1.47L-7.57 1.40L-7.57 -1.40L-5.30 -1.47L-4.79 -2.71L-6.35 -4.36L-4.36 -6.35L-2.71 -4.79L-1.47 -5.30Z" stroke="#2b2b2b" stroke-width="1.2" stroke-linejoin="round"/><circle r="2.5" stroke="#3bb3e8" stroke-width="1.2"/></g>
<path d="M93.4 6.5H102.5M93.4 12.4H102.5M93.4 18.4H102.5" stroke="#2b2b2b" stroke-width="1.25"/>
<path d="M88.3 5L89.3 4.2V8M88.2 10.6Q89.2 9.8 89.9 10.7Q90 11.6 88.2 13.8H90.1M88.2 16.3H89.9L89 17.8Q90.3 18.2 89.8 19.4Q89.2 20.2 88.1 19.8" stroke="#3bb3e8" stroke-width="0.95"/>
<path d="M109.2 5.4H124.7M109.2 9.6H124.7M109.2 13.6H115.6M109.2 17.7H115.6" stroke="#2b2b2b" stroke-width="1.25"/>
<path d="M118.3 15.6H124.7M121.5 12.4V18.8" stroke="#3bb3e8" stroke-width="1.25"/>
<path d="M144.5 7.4H140.4a1.6 1.6 0 0 0 -1.6 1.6V17.4a1.6 1.6 0 0 0 1.6 1.6H148.9a1.6 1.6 0 0 0 1.6 -1.6V13.5" stroke="#505050" stroke-width="1.5"/>
<path d="M145.2 12.4L152.9 5M146.8 4.7H153.2V11.1" stroke="#3bb3e8" stroke-width="1.3"/>
<path d="M169.7 16.5H167.3V7.4H177.4M174.7 4.6L177.8 7.4L174.7 10.3" stroke="#2b2b2b" stroke-width="1.3"/>
<path d="M180.8 7.4H182.8V16.1H172.6M175.1 13.3L172.2 16.1L175.1 19.2" stroke="#3bb3e8" stroke-width="1.3"/>
</svg>
<div class="btn" style="left:797px;top:899.5px;width:20.5px;height:21px;border-color:#dcdcdc"></div>
<svg style="left:805.75px;top:903.5px" width="3" height="13" viewBox="0 0 3 13"><circle cx="1.5" cy="1.5" r="1.2" fill="#444"/><circle cx="1.5" cy="6.5" r="1.2" fill="#444"/><circle cx="1.5" cy="11.5" r="1.2" fill="#444"/></svg>
<div class="btn" style="left:1202px;top:901px;width:18px;height:22px"></div>
<svg style="left:1205px;top:906px" width="12" height="12" viewBox="0 0 12 12"><path d="M0.7 4.9C1.9 1.1 6.6 -0.3 9.9 2.7" fill="none" stroke="#2b2b2b" stroke-width="1.4"/><path d="M11.9 0.1V5.3L7.3 3.7Z" fill="#2b2b2b"/><path d="M11.3 7.5C10.1 11 5.4 12.3 2.1 9.5" fill="none" stroke="#3bb3e8" stroke-width="1.4"/><path d="M0.1 11.9V6.7L4.7 8.3Z" fill="#3bb3e8"/></svg>
<div class="btn" style="left:1224px;top:901px;width:72px;height:22px;line-height:22px;padding-left:16px">OK</div>
<svg style="left:1243px;top:906px" width="13" height="11" viewBox="0 0 13 11"><path d="M0.9 6.9L4.4 10.6L12.6 1.2" fill="none" stroke="#111" stroke-width="1.3"/></svg>
<div class="btn" style="left:1300px;top:901px;width:92px;height:22px;line-height:22px;padding-left:14px">Закрыть</div>
<svg style="left:1315px;top:907px" width="10" height="10" viewBox="0 0 10 10"><path d="M0.5 0.5L9.5 9.5M9.5 0.5L0.5 9.5" stroke="#111" stroke-width="1.3" fill="none"/></svg>
<div class="a" style="left:796px;top:106px;width:38px;height:383px;border:2px solid #b5002f"></div>
<div class="a" style="left:801px;top:512px;width:31px;height:278px;border:2px solid #b5002f"></div>
<div class="circ" style="left:775.5px;top:92.3px">2</div>
<div class="circ" style="left:775.5px;top:500.2px">3</div>
</body></html>
